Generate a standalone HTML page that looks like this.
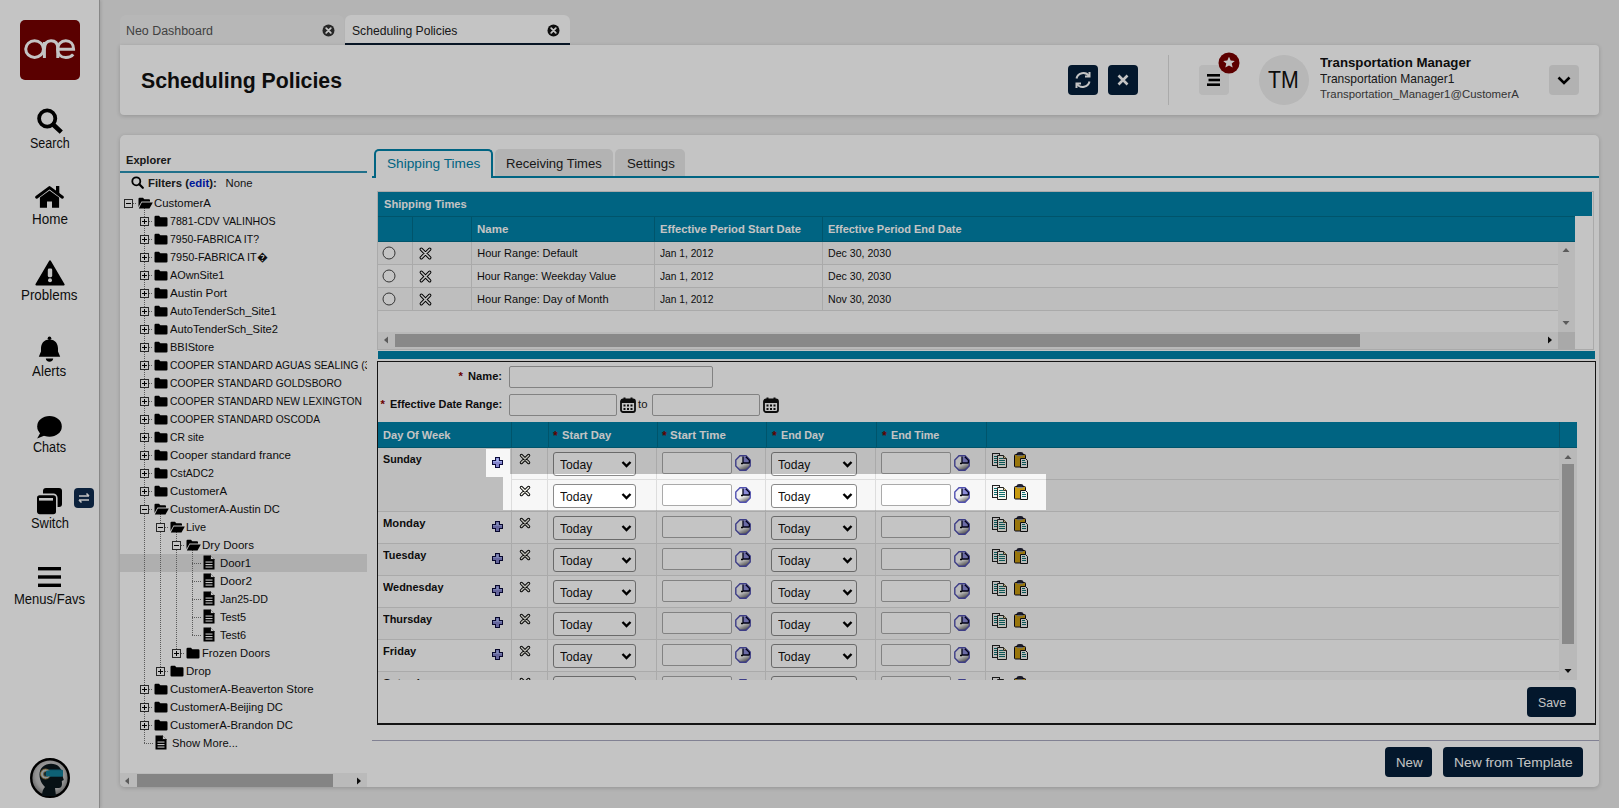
<!DOCTYPE html><html><head><meta charset="utf-8"><style>
*{box-sizing:border-box;margin:0;padding:0}
html,body{width:1619px;height:808px;overflow:hidden;background:#eaeaea;font-family:"Liberation Sans",sans-serif;color:#000}
.ab{position:absolute}
.t{position:absolute;white-space:nowrap;line-height:1;margin-top:1px}
</style></head><body>

<div class="ab" style="left:0;top:0;width:100px;height:808px;background:#fff;border-right:1px solid #b0b0b0;box-shadow:1px 0 3px rgba(0,0,0,.12)"></div>
<div class="ab" style="left:20px;top:20px;width:60px;height:60px;background:#750000;border-radius:5px"></div>
<svg class="ab" style="left:20px;top:20px" width="60" height="60" viewBox="0 0 60 60" fill="none" stroke="#fff" stroke-width="3">
<ellipse cx="14.6" cy="29.1" rx="8.9" ry="8.3"/>
<path d="M24.4 38 V22 M24.4 29.5 C24.4 23.5 27.2 20.8 31 20.8 C35.2 20.8 37.8 23.5 37.8 28.5 V38"/>
<path d="M38.2 29.3 H53.6 C53.6 24 50.3 20.8 45.8 20.8 C41 20.8 37.6 24.5 37.6 29.2 C37.6 34.3 41 37.6 45.8 37.6 C49 37.6 51.6 36.4 53.2 34.4"/>
</svg>
<svg class="ab" style="left:36px;top:107px" width="27" height="27" viewBox="0 0 27 27"><circle cx="11.2" cy="11.5" r="8.1" fill="none" stroke="#000" stroke-width="3.8"/><path d="M17.4 17.8 L23.6 23.6" stroke="#000" stroke-width="4.6" stroke-linecap="square"/></svg>
<div class="t" style="left:29.70px;top:136px;font-size:13.8px;color:#111;"><span style="display:inline-block;transform:scaleX(0.9062);transform-origin:0 0">Search</span></div>
<svg class="ab" style="left:34px;top:184px" width="31" height="26" viewBox="0 0 31 26"><rect x="22" y="2" width="3.3" height="8" fill="#000"/><path d="M2.6 13.2 L15.5 3.6 L28.4 13.2" fill="none" stroke="#000" stroke-width="3" stroke-linecap="round" stroke-linejoin="round"/><path d="M5.9 13.5 L15.5 6.6 L25.1 13.5 V23.7 H18 V17.6 H13 V23.7 H5.9 Z" fill="#000"/></svg>
<div class="t" style="left:31.55px;top:212px;font-size:13.8px;color:#111;"><span style="display:inline-block;transform:scaleX(0.9755);transform-origin:0 0">Home</span></div>
<svg class="ab" style="left:35px;top:260px" width="30" height="26" viewBox="0 0 30 26"><path d="M15 1.5 L28.5 24.5 H1.5 Z" fill="#000" stroke="#000" stroke-width="2.2" stroke-linejoin="round"/><rect x="12.8" y="8.6" width="4.4" height="8.6" rx="1.4" fill="#fff"/><circle cx="15" cy="20.2" r="2" fill="#fff"/></svg>
<div class="t" style="left:21.25px;top:288px;font-size:13.8px;color:#111;"><span style="display:inline-block;transform:scaleX(0.9691);transform-origin:0 0">Problems</span></div>
<svg class="ab" style="left:38px;top:336px" width="24" height="27" viewBox="0 0 24 27"><circle cx="11.5" cy="2.2" r="1.8" fill="#000"/><path d="M11.5 3.4 C17.5 3.4 20 8 20 12.5 V15.5 L22.2 20.8 H0.8 L3 15.5 V12.5 C3 8 5.5 3.4 11.5 3.4 Z" fill="#000"/><path d="M7.8 22.6 H15.2 C15.2 24.6 13.6 25.8 11.5 25.8 C9.4 25.8 7.8 24.6 7.8 22.6 Z" fill="#000"/></svg>
<div class="t" style="left:32.40px;top:364px;font-size:13.8px;color:#111;"><span style="display:inline-block;transform:scaleX(0.9688);transform-origin:0 0">Alerts</span></div>
<svg class="ab" style="left:36px;top:415px" width="28" height="25" viewBox="0 0 28 25"><ellipse cx="13.5" cy="11.4" rx="12.3" ry="10.3" fill="#000"/><path d="M5 16.5 L1.2 23.6 L10.5 19.8 Z" fill="#000"/></svg>
<div class="t" style="left:33.00px;top:440px;font-size:13.8px;color:#111;"><span style="display:inline-block;transform:scaleX(0.9141);transform-origin:0 0">Chats</span></div>
<svg class="ab" style="left:36px;top:487px" width="27" height="28" viewBox="0 0 27 28"><rect x="7" y="1" width="19" height="19" rx="3" fill="#000"/><rect x="0.2" y="7.4" width="20.6" height="20.6" rx="3.5" fill="#000" stroke="#fff" stroke-width="1.6"/><rect x="3" y="11" width="14" height="2.6" fill="#fff"/></svg>
<div class="ab" style="left:74px;top:488px;width:20px;height:20px;background:#0f2b4f;border-radius:4px"></div>
<svg class="ab" style="left:74px;top:488px" width="20" height="20" viewBox="0 0 20 20" fill="none" stroke="#fff" stroke-width="1.5"><path d="M5 8 H15 M12.5 5.5 L15 8 M15 12 H5 M7.5 14.5 L5 12"/></svg>
<div class="t" style="left:30.50px;top:516px;font-size:13.8px;color:#111;"><span style="display:inline-block;transform:scaleX(0.9360);transform-origin:0 0">Switch</span></div>
<svg class="ab" style="left:38px;top:566px" width="23" height="22" viewBox="0 0 23 22"><rect x="0" y="1" width="23" height="3.4" fill="#000"/><rect x="0" y="9.3" width="23" height="3.4" fill="#000"/><rect x="0" y="17.6" width="23" height="3.4" fill="#000"/></svg>
<div class="t" style="left:14.00px;top:592px;font-size:13.8px;color:#111;"><span style="display:inline-block;transform:scaleX(0.9441);transform-origin:0 0">Menus/Favs</span></div>
<svg class="ab" style="left:30px;top:758px" width="40" height="40" viewBox="0 0 40 40"><defs><radialGradient id="avg" cx="0.5" cy="0.45" r="0.55"><stop offset="0" stop-color="#e8e8e8"/><stop offset="0.7" stop-color="#bdbdbd"/><stop offset="1" stop-color="#7a7a7a"/></radialGradient></defs><circle cx="20" cy="20" r="18.8" fill="url(#avg)" stroke="#000" stroke-width="2.4"/><path d="M12 38 C12 34 13 31 15 29 C12 26 9.5 22 9.5 16.5 C9.5 10 14.5 5.8 21 5.8 C27.5 5.8 31.8 10 31.8 15.5 L33.8 22 L31.8 23 L32 26 C32 28.5 30.5 30.5 28 30 L25 30 L26 38 Z" fill="#0a171c"/><rect x="15" y="11.5" width="18" height="7" rx="1.5" fill="#0e6f86"/><circle cx="15.5" cy="16" r="5" fill="#b9c4c8" stroke="#a08040" stroke-width="0.9"/><circle cx="16" cy="16" r="2.6" fill="#1b3a44" stroke="#a08040" stroke-width="0.7"/><rect x="16" y="12.5" width="17" height="6" rx="1.2" fill="#137f99"/></svg>
<div class="ab" style="left:120px;top:15px;width:224px;height:30px;background:#efefef;border-radius:6px 6px 0 0"></div>
<div class="t" style="left:126.20px;top:24px;font-size:12.3px;color:#555;"><span style="display:inline-block;transform:scaleX(1.0093);transform-origin:0 0">Neo Dashboard</span></div>
<svg class="ab" style="left:322px;top:24px" width="13" height="13" viewBox="0 0 13 13"><circle cx="6.5" cy="6.5" r="6" fill="#333"/><path d="M4.2 4.2 L8.8 8.8 M8.8 4.2 L4.2 8.8" stroke="#fff" stroke-width="1.8" stroke-linecap="round"/></svg>
<div class="ab" style="left:345px;top:15px;width:225px;height:30px;background:#fff;border-radius:6px 6px 0 0;border-bottom:2px solid #0c1e33"></div>
<div class="t" style="left:351.60px;top:24px;font-size:12.3px;color:#222;"><span style="display:inline-block;transform:scaleX(0.9888);transform-origin:0 0">Scheduling Policies</span></div>
<svg class="ab" style="left:547px;top:24px" width="13" height="13" viewBox="0 0 13 13"><circle cx="6.5" cy="6.5" r="6" fill="#111"/><path d="M4.2 4.2 L8.8 8.8 M8.8 4.2 L4.2 8.8" stroke="#fff" stroke-width="1.8" stroke-linecap="round"/></svg>
<div class="ab" style="left:120px;top:45px;width:1479px;height:70px;background:#fff;border-radius:0 4px 4px 4px;box-shadow:0 1px 4px rgba(0,0,0,.18)"></div>
<div class="t" style="left:140.70px;top:70px;font-size:21.5px;font-weight:bold;color:#111;"><span style="display:inline-block;transform:scaleX(0.9897);transform-origin:0 0">Scheduling Policies</span></div>
<div class="ab" style="left:1068px;top:65px;width:30px;height:30px;background:#041f3a;border-radius:4px"></div>
<svg class="ab" style="left:1068px;top:65px" width="30" height="30" viewBox="0 0 30 30" fill="none" stroke="#fff" stroke-width="2"><path d="M8.5 13.5 A7 7 0 0 1 21 11 M21.5 16.5 A7 7 0 0 1 9 19"/><path d="M21.5 7 V11.5 H17" /><path d="M8.5 23 V18.5 H13"/></svg>
<div class="ab" style="left:1108px;top:65px;width:30px;height:30px;background:#041f3a;border-radius:4px"></div>
<svg class="ab" style="left:1108px;top:65px" width="30" height="30" viewBox="0 0 30 30" fill="none" stroke="#fff" stroke-width="2.6"><path d="M10.5 10.5 L19.5 19.5 M19.5 10.5 L10.5 19.5"/></svg>
<div class="ab" style="left:1168px;top:55px;width:1px;height:50px;background:#ddd"></div>
<div class="ab" style="left:1199px;top:65px;width:30px;height:30px;background:#f0f0f0;border-radius:4px"></div>
<svg class="ab" style="left:1199px;top:65px" width="30" height="30" viewBox="0 0 30 30" fill="#000"><rect x="8" y="9" width="13" height="2.6"/><rect x="9.5" y="13.7" width="11.5" height="2.6"/><rect x="8" y="18.4" width="13" height="2.6"/></svg>
<svg class="ab" style="left:1218px;top:52px" width="22" height="22" viewBox="0 0 22 22"><circle cx="11" cy="11" r="10.5" fill="#7a0000"/><path d="M11 4.8 L12.7 8.6 L16.8 8.9 L13.7 11.6 L14.7 15.6 L11 13.4 L7.3 15.6 L8.3 11.6 L5.2 8.9 L9.3 8.6 Z" fill="#fff"/></svg>
<div class="ab" style="left:1259px;top:55px;width:50px;height:50px;background:#eee;border-radius:50%"></div>
<div class="t" style="left:1268.40px;top:68px;font-size:23.2px;color:#111;"><span style="display:inline-block;transform:scaleX(0.9194);transform-origin:0 0">TM</span></div>
<div class="t" style="left:1319.60px;top:55px;font-size:13.3px;font-weight:bold;color:#111;"><span style="display:inline-block;transform:scaleX(0.9967);transform-origin:0 0">Transportation Manager</span></div>
<div class="t" style="left:1319.60px;top:72px;font-size:12.1px;color:#222;"><span style="display:inline-block;transform:scaleX(0.9934);transform-origin:0 0">Transportation Manager1</span></div>
<div class="t" style="left:1319.60px;top:88px;font-size:11.4px;color:#444;"><span style="display:inline-block;transform:scaleX(0.9980);transform-origin:0 0">Transportation_Manager1@CustomerA</span></div>
<div class="ab" style="left:1549px;top:65px;width:30px;height:30px;background:#e8e8e8;border-radius:4px"></div>
<svg class="ab" style="left:1549px;top:65px" width="30" height="30" viewBox="0 0 30 30" fill="none" stroke="#000" stroke-width="2.6"><path d="M9.5 12.5 L15 18 L20.5 12.5"/></svg>
<div class="ab" style="left:120px;top:135px;width:1479px;height:652px;background:#fff;border-radius:5px;box-shadow:0 1px 4px rgba(0,0,0,.18)"></div>
<div class="t" style="left:125.70px;top:154px;font-size:11.5px;font-weight:bold;color:#222;"><span style="display:inline-block;transform:scaleX(0.9636);transform-origin:0 0">Explorer</span></div>
<div class="ab" style="left:120px;top:171px;width:247px;height:2px;background:#2a92b4"></div>
<svg class="ab" style="left:131px;top:176px" width="13" height="13" viewBox="0 0 13 13"><circle cx="5.3" cy="5.3" r="4" fill="none" stroke="#000" stroke-width="1.8"/><path d="M8.3 8.3 L11.8 11.8" stroke="#000" stroke-width="2.2" stroke-linecap="round"/></svg>
<div class="t" style="left:147.60px;top:177px;font-size:11.3px;font-weight:bold;color:#222;"><span style="display:inline-block;transform:scaleX(1.0044);transform-origin:0 0">Filters (<span style="color:#0022c8">edit</span>):</span></div>
<div class="t" style="left:225.60px;top:177px;font-size:11.3px;color:#222;"><span style="display:inline-block;transform:scaleX(1.0000);transform-origin:0 0">None</span></div>
<div class="ab" style="left:120px;top:554px;width:247px;height:18px;background:#e4e4e4"></div>
<div class="ab" style="left:144px;top:208px;width:1px;height:535px;background-image:linear-gradient(#777 50%,transparent 50%);background-size:1px 2px"></div>
<div class="ab" style="left:160px;top:514px;width:1px;height:157px;background-image:linear-gradient(#777 50%,transparent 50%);background-size:1px 2px"></div>
<div class="ab" style="left:176px;top:532px;width:1px;height:121px;background-image:linear-gradient(#777 50%,transparent 50%);background-size:1px 2px"></div>
<div class="ab" style="left:192px;top:550px;width:1px;height:85px;background-image:linear-gradient(#777 50%,transparent 50%);background-size:1px 2px"></div>
<div class="ab" style="left:124px;top:199px;width:9px;height:9px;border:1px solid #333;background:#fff"></div>
<div class="ab" style="left:126px;top:203px;width:5px;height:1px;background:#000"></div>
<div class="ab" style="left:133px;top:203px;width:4px;height:1px;background-image:linear-gradient(90deg,#777 50%,transparent 50%);background-size:2px 1px"></div>
<svg class="ab" style="left:138px;top:197px" width="15" height="12" viewBox="0 0 15 12"><path d="M0.5 1.8 Q0.5 0.8 1.5 0.8 H5 L6.3 2.2 H11 Q12 2.2 12 3.2 V4.5 H3.5 L0.5 10 Z" fill="#000"/><path d="M3.8 5.5 H14.8 L11.5 11.5 H0.8 Z" fill="#000"/></svg>
<div class="t" style="left:154px;top:197px;font-size:11.1px;color:#111;overflow:hidden;width:213px"><span style="display:inline-block;transform:scaleX(1.023);transform-origin:0 0">CustomerA</span></div>
<div class="ab" style="left:140px;top:217px;width:9px;height:9px;border:1px solid #333;background:#fff"></div>
<div class="ab" style="left:142px;top:221px;width:5px;height:1px;background:#000"></div>
<div class="ab" style="left:144px;top:219px;width:1px;height:5px;background:#000"></div>
<div class="ab" style="left:149px;top:221px;width:4px;height:1px;background-image:linear-gradient(90deg,#777 50%,transparent 50%);background-size:2px 1px"></div>
<svg class="ab" style="left:154px;top:215px" width="14" height="12" viewBox="0 0 14 12"><path d="M0.5 2 Q0.5 0.8 1.7 0.8 H5 L6.3 2.2 H12.3 Q13.5 2.2 13.5 3.4 V10.5 Q13.5 11.5 12.3 11.5 H1.7 Q0.5 11.5 0.5 10.5 Z" fill="#000"/></svg>
<div class="t" style="left:170px;top:215px;font-size:11.1px;color:#111;overflow:hidden;width:197px"><span style="display:inline-block;transform:scaleX(0.959);transform-origin:0 0">7881-CDV VALINHOS</span></div>
<div class="ab" style="left:140px;top:235px;width:9px;height:9px;border:1px solid #333;background:#fff"></div>
<div class="ab" style="left:142px;top:239px;width:5px;height:1px;background:#000"></div>
<div class="ab" style="left:144px;top:237px;width:1px;height:5px;background:#000"></div>
<div class="ab" style="left:149px;top:239px;width:4px;height:1px;background-image:linear-gradient(90deg,#777 50%,transparent 50%);background-size:2px 1px"></div>
<svg class="ab" style="left:154px;top:233px" width="14" height="12" viewBox="0 0 14 12"><path d="M0.5 2 Q0.5 0.8 1.7 0.8 H5 L6.3 2.2 H12.3 Q13.5 2.2 13.5 3.4 V10.5 Q13.5 11.5 12.3 11.5 H1.7 Q0.5 11.5 0.5 10.5 Z" fill="#000"/></svg>
<div class="t" style="left:170px;top:233px;font-size:11.1px;color:#111;overflow:hidden;width:197px"><span style="display:inline-block;transform:scaleX(0.943);transform-origin:0 0">7950-FABRICA IT?</span></div>
<div class="ab" style="left:140px;top:253px;width:9px;height:9px;border:1px solid #333;background:#fff"></div>
<div class="ab" style="left:142px;top:257px;width:5px;height:1px;background:#000"></div>
<div class="ab" style="left:144px;top:255px;width:1px;height:5px;background:#000"></div>
<div class="ab" style="left:149px;top:257px;width:4px;height:1px;background-image:linear-gradient(90deg,#777 50%,transparent 50%);background-size:2px 1px"></div>
<svg class="ab" style="left:154px;top:251px" width="14" height="12" viewBox="0 0 14 12"><path d="M0.5 2 Q0.5 0.8 1.7 0.8 H5 L6.3 2.2 H12.3 Q13.5 2.2 13.5 3.4 V10.5 Q13.5 11.5 12.3 11.5 H1.7 Q0.5 11.5 0.5 10.5 Z" fill="#000"/></svg>
<div class="t" style="left:170px;top:251px;font-size:11.1px;color:#111;overflow:hidden;width:197px"><span style="display:inline-block;transform:scaleX(0.984);transform-origin:0 0">7950-FABRICA IT�</span></div>
<div class="ab" style="left:140px;top:271px;width:9px;height:9px;border:1px solid #333;background:#fff"></div>
<div class="ab" style="left:142px;top:275px;width:5px;height:1px;background:#000"></div>
<div class="ab" style="left:144px;top:273px;width:1px;height:5px;background:#000"></div>
<div class="ab" style="left:149px;top:275px;width:4px;height:1px;background-image:linear-gradient(90deg,#777 50%,transparent 50%);background-size:2px 1px"></div>
<svg class="ab" style="left:154px;top:269px" width="14" height="12" viewBox="0 0 14 12"><path d="M0.5 2 Q0.5 0.8 1.7 0.8 H5 L6.3 2.2 H12.3 Q13.5 2.2 13.5 3.4 V10.5 Q13.5 11.5 12.3 11.5 H1.7 Q0.5 11.5 0.5 10.5 Z" fill="#000"/></svg>
<div class="t" style="left:170px;top:269px;font-size:11.1px;color:#111;overflow:hidden;width:197px"><span style="display:inline-block;transform:scaleX(0.980);transform-origin:0 0">AOwnSite1</span></div>
<div class="ab" style="left:140px;top:289px;width:9px;height:9px;border:1px solid #333;background:#fff"></div>
<div class="ab" style="left:142px;top:293px;width:5px;height:1px;background:#000"></div>
<div class="ab" style="left:144px;top:291px;width:1px;height:5px;background:#000"></div>
<div class="ab" style="left:149px;top:293px;width:4px;height:1px;background-image:linear-gradient(90deg,#777 50%,transparent 50%);background-size:2px 1px"></div>
<svg class="ab" style="left:154px;top:287px" width="14" height="12" viewBox="0 0 14 12"><path d="M0.5 2 Q0.5 0.8 1.7 0.8 H5 L6.3 2.2 H12.3 Q13.5 2.2 13.5 3.4 V10.5 Q13.5 11.5 12.3 11.5 H1.7 Q0.5 11.5 0.5 10.5 Z" fill="#000"/></svg>
<div class="t" style="left:170px;top:287px;font-size:11.1px;color:#111;overflow:hidden;width:197px"><span style="display:inline-block;transform:scaleX(1.050);transform-origin:0 0">Austin Port</span></div>
<div class="ab" style="left:140px;top:307px;width:9px;height:9px;border:1px solid #333;background:#fff"></div>
<div class="ab" style="left:142px;top:311px;width:5px;height:1px;background:#000"></div>
<div class="ab" style="left:144px;top:309px;width:1px;height:5px;background:#000"></div>
<div class="ab" style="left:149px;top:311px;width:4px;height:1px;background-image:linear-gradient(90deg,#777 50%,transparent 50%);background-size:2px 1px"></div>
<svg class="ab" style="left:154px;top:305px" width="14" height="12" viewBox="0 0 14 12"><path d="M0.5 2 Q0.5 0.8 1.7 0.8 H5 L6.3 2.2 H12.3 Q13.5 2.2 13.5 3.4 V10.5 Q13.5 11.5 12.3 11.5 H1.7 Q0.5 11.5 0.5 10.5 Z" fill="#000"/></svg>
<div class="t" style="left:170px;top:305px;font-size:11.1px;color:#111;overflow:hidden;width:197px"><span style="display:inline-block;transform:scaleX(0.991);transform-origin:0 0">AutoTenderSch_Site1</span></div>
<div class="ab" style="left:140px;top:325px;width:9px;height:9px;border:1px solid #333;background:#fff"></div>
<div class="ab" style="left:142px;top:329px;width:5px;height:1px;background:#000"></div>
<div class="ab" style="left:144px;top:327px;width:1px;height:5px;background:#000"></div>
<div class="ab" style="left:149px;top:329px;width:4px;height:1px;background-image:linear-gradient(90deg,#777 50%,transparent 50%);background-size:2px 1px"></div>
<svg class="ab" style="left:154px;top:323px" width="14" height="12" viewBox="0 0 14 12"><path d="M0.5 2 Q0.5 0.8 1.7 0.8 H5 L6.3 2.2 H12.3 Q13.5 2.2 13.5 3.4 V10.5 Q13.5 11.5 12.3 11.5 H1.7 Q0.5 11.5 0.5 10.5 Z" fill="#000"/></svg>
<div class="t" style="left:170px;top:323px;font-size:11.1px;color:#111;overflow:hidden;width:197px"><span style="display:inline-block;transform:scaleX(1.006);transform-origin:0 0">AutoTenderSch_Site2</span></div>
<div class="ab" style="left:140px;top:343px;width:9px;height:9px;border:1px solid #333;background:#fff"></div>
<div class="ab" style="left:142px;top:347px;width:5px;height:1px;background:#000"></div>
<div class="ab" style="left:144px;top:345px;width:1px;height:5px;background:#000"></div>
<div class="ab" style="left:149px;top:347px;width:4px;height:1px;background-image:linear-gradient(90deg,#777 50%,transparent 50%);background-size:2px 1px"></div>
<svg class="ab" style="left:154px;top:341px" width="14" height="12" viewBox="0 0 14 12"><path d="M0.5 2 Q0.5 0.8 1.7 0.8 H5 L6.3 2.2 H12.3 Q13.5 2.2 13.5 3.4 V10.5 Q13.5 11.5 12.3 11.5 H1.7 Q0.5 11.5 0.5 10.5 Z" fill="#000"/></svg>
<div class="t" style="left:170px;top:341px;font-size:11.1px;color:#111;overflow:hidden;width:197px"><span style="display:inline-block;transform:scaleX(0.991);transform-origin:0 0">BBIStore</span></div>
<div class="ab" style="left:140px;top:361px;width:9px;height:9px;border:1px solid #333;background:#fff"></div>
<div class="ab" style="left:142px;top:365px;width:5px;height:1px;background:#000"></div>
<div class="ab" style="left:144px;top:363px;width:1px;height:5px;background:#000"></div>
<div class="ab" style="left:149px;top:365px;width:4px;height:1px;background-image:linear-gradient(90deg,#777 50%,transparent 50%);background-size:2px 1px"></div>
<svg class="ab" style="left:154px;top:359px" width="14" height="12" viewBox="0 0 14 12"><path d="M0.5 2 Q0.5 0.8 1.7 0.8 H5 L6.3 2.2 H12.3 Q13.5 2.2 13.5 3.4 V10.5 Q13.5 11.5 12.3 11.5 H1.7 Q0.5 11.5 0.5 10.5 Z" fill="#000"/></svg>
<div class="t" style="left:170px;top:359px;font-size:11.1px;color:#111;overflow:hidden;width:197px"><span style="display:inline-block;transform:scaleX(0.924);transform-origin:0 0">COOPER STANDARD AGUAS SEALING (3</span></div>
<div class="ab" style="left:140px;top:379px;width:9px;height:9px;border:1px solid #333;background:#fff"></div>
<div class="ab" style="left:142px;top:383px;width:5px;height:1px;background:#000"></div>
<div class="ab" style="left:144px;top:381px;width:1px;height:5px;background:#000"></div>
<div class="ab" style="left:149px;top:383px;width:4px;height:1px;background-image:linear-gradient(90deg,#777 50%,transparent 50%);background-size:2px 1px"></div>
<svg class="ab" style="left:154px;top:377px" width="14" height="12" viewBox="0 0 14 12"><path d="M0.5 2 Q0.5 0.8 1.7 0.8 H5 L6.3 2.2 H12.3 Q13.5 2.2 13.5 3.4 V10.5 Q13.5 11.5 12.3 11.5 H1.7 Q0.5 11.5 0.5 10.5 Z" fill="#000"/></svg>
<div class="t" style="left:170px;top:377px;font-size:11.1px;color:#111;overflow:hidden;width:197px"><span style="display:inline-block;transform:scaleX(0.924);transform-origin:0 0">COOPER STANDARD GOLDSBORO</span></div>
<div class="ab" style="left:140px;top:397px;width:9px;height:9px;border:1px solid #333;background:#fff"></div>
<div class="ab" style="left:142px;top:401px;width:5px;height:1px;background:#000"></div>
<div class="ab" style="left:144px;top:399px;width:1px;height:5px;background:#000"></div>
<div class="ab" style="left:149px;top:401px;width:4px;height:1px;background-image:linear-gradient(90deg,#777 50%,transparent 50%);background-size:2px 1px"></div>
<svg class="ab" style="left:154px;top:395px" width="14" height="12" viewBox="0 0 14 12"><path d="M0.5 2 Q0.5 0.8 1.7 0.8 H5 L6.3 2.2 H12.3 Q13.5 2.2 13.5 3.4 V10.5 Q13.5 11.5 12.3 11.5 H1.7 Q0.5 11.5 0.5 10.5 Z" fill="#000"/></svg>
<div class="t" style="left:170px;top:395px;font-size:11.1px;color:#111;overflow:hidden;width:197px"><span style="display:inline-block;transform:scaleX(0.926);transform-origin:0 0">COOPER STANDARD NEW LEXINGTON</span></div>
<div class="ab" style="left:140px;top:415px;width:9px;height:9px;border:1px solid #333;background:#fff"></div>
<div class="ab" style="left:142px;top:419px;width:5px;height:1px;background:#000"></div>
<div class="ab" style="left:144px;top:417px;width:1px;height:5px;background:#000"></div>
<div class="ab" style="left:149px;top:419px;width:4px;height:1px;background-image:linear-gradient(90deg,#777 50%,transparent 50%);background-size:2px 1px"></div>
<svg class="ab" style="left:154px;top:413px" width="14" height="12" viewBox="0 0 14 12"><path d="M0.5 2 Q0.5 0.8 1.7 0.8 H5 L6.3 2.2 H12.3 Q13.5 2.2 13.5 3.4 V10.5 Q13.5 11.5 12.3 11.5 H1.7 Q0.5 11.5 0.5 10.5 Z" fill="#000"/></svg>
<div class="t" style="left:170px;top:413px;font-size:11.1px;color:#111;overflow:hidden;width:197px"><span style="display:inline-block;transform:scaleX(0.923);transform-origin:0 0">COOPER STANDARD OSCODA</span></div>
<div class="ab" style="left:140px;top:433px;width:9px;height:9px;border:1px solid #333;background:#fff"></div>
<div class="ab" style="left:142px;top:437px;width:5px;height:1px;background:#000"></div>
<div class="ab" style="left:144px;top:435px;width:1px;height:5px;background:#000"></div>
<div class="ab" style="left:149px;top:437px;width:4px;height:1px;background-image:linear-gradient(90deg,#777 50%,transparent 50%);background-size:2px 1px"></div>
<svg class="ab" style="left:154px;top:431px" width="14" height="12" viewBox="0 0 14 12"><path d="M0.5 2 Q0.5 0.8 1.7 0.8 H5 L6.3 2.2 H12.3 Q13.5 2.2 13.5 3.4 V10.5 Q13.5 11.5 12.3 11.5 H1.7 Q0.5 11.5 0.5 10.5 Z" fill="#000"/></svg>
<div class="t" style="left:170px;top:431px;font-size:11.1px;color:#111;overflow:hidden;width:197px"><span style="display:inline-block;transform:scaleX(0.934);transform-origin:0 0">CR site</span></div>
<div class="ab" style="left:140px;top:451px;width:9px;height:9px;border:1px solid #333;background:#fff"></div>
<div class="ab" style="left:142px;top:455px;width:5px;height:1px;background:#000"></div>
<div class="ab" style="left:144px;top:453px;width:1px;height:5px;background:#000"></div>
<div class="ab" style="left:149px;top:455px;width:4px;height:1px;background-image:linear-gradient(90deg,#777 50%,transparent 50%);background-size:2px 1px"></div>
<svg class="ab" style="left:154px;top:449px" width="14" height="12" viewBox="0 0 14 12"><path d="M0.5 2 Q0.5 0.8 1.7 0.8 H5 L6.3 2.2 H12.3 Q13.5 2.2 13.5 3.4 V10.5 Q13.5 11.5 12.3 11.5 H1.7 Q0.5 11.5 0.5 10.5 Z" fill="#000"/></svg>
<div class="t" style="left:170px;top:449px;font-size:11.1px;color:#111;overflow:hidden;width:197px"><span style="display:inline-block;transform:scaleX(1.038);transform-origin:0 0">Cooper standard france</span></div>
<div class="ab" style="left:140px;top:469px;width:9px;height:9px;border:1px solid #333;background:#fff"></div>
<div class="ab" style="left:142px;top:473px;width:5px;height:1px;background:#000"></div>
<div class="ab" style="left:144px;top:471px;width:1px;height:5px;background:#000"></div>
<div class="ab" style="left:149px;top:473px;width:4px;height:1px;background-image:linear-gradient(90deg,#777 50%,transparent 50%);background-size:2px 1px"></div>
<svg class="ab" style="left:154px;top:467px" width="14" height="12" viewBox="0 0 14 12"><path d="M0.5 2 Q0.5 0.8 1.7 0.8 H5 L6.3 2.2 H12.3 Q13.5 2.2 13.5 3.4 V10.5 Q13.5 11.5 12.3 11.5 H1.7 Q0.5 11.5 0.5 10.5 Z" fill="#000"/></svg>
<div class="t" style="left:170px;top:467px;font-size:11.1px;color:#111;overflow:hidden;width:197px"><span style="display:inline-block;transform:scaleX(0.950);transform-origin:0 0">CstADC2</span></div>
<div class="ab" style="left:140px;top:487px;width:9px;height:9px;border:1px solid #333;background:#fff"></div>
<div class="ab" style="left:142px;top:491px;width:5px;height:1px;background:#000"></div>
<div class="ab" style="left:144px;top:489px;width:1px;height:5px;background:#000"></div>
<div class="ab" style="left:149px;top:491px;width:4px;height:1px;background-image:linear-gradient(90deg,#777 50%,transparent 50%);background-size:2px 1px"></div>
<svg class="ab" style="left:154px;top:485px" width="14" height="12" viewBox="0 0 14 12"><path d="M0.5 2 Q0.5 0.8 1.7 0.8 H5 L6.3 2.2 H12.3 Q13.5 2.2 13.5 3.4 V10.5 Q13.5 11.5 12.3 11.5 H1.7 Q0.5 11.5 0.5 10.5 Z" fill="#000"/></svg>
<div class="t" style="left:170px;top:485px;font-size:11.1px;color:#111;overflow:hidden;width:197px"><span style="display:inline-block;transform:scaleX(1.027);transform-origin:0 0">CustomerA</span></div>
<div class="ab" style="left:140px;top:505px;width:9px;height:9px;border:1px solid #333;background:#fff"></div>
<div class="ab" style="left:142px;top:509px;width:5px;height:1px;background:#000"></div>
<div class="ab" style="left:149px;top:509px;width:4px;height:1px;background-image:linear-gradient(90deg,#777 50%,transparent 50%);background-size:2px 1px"></div>
<svg class="ab" style="left:154px;top:503px" width="15" height="12" viewBox="0 0 15 12"><path d="M0.5 1.8 Q0.5 0.8 1.5 0.8 H5 L6.3 2.2 H11 Q12 2.2 12 3.2 V4.5 H3.5 L0.5 10 Z" fill="#000"/><path d="M3.8 5.5 H14.8 L11.5 11.5 H0.8 Z" fill="#000"/></svg>
<div class="t" style="left:170px;top:503px;font-size:11.1px;color:#111;overflow:hidden;width:197px"><span style="display:inline-block;transform:scaleX(1.007);transform-origin:0 0">CustomerA-Austin DC</span></div>
<div class="ab" style="left:156px;top:523px;width:9px;height:9px;border:1px solid #333;background:#fff"></div>
<div class="ab" style="left:158px;top:527px;width:5px;height:1px;background:#000"></div>
<div class="ab" style="left:165px;top:527px;width:4px;height:1px;background-image:linear-gradient(90deg,#777 50%,transparent 50%);background-size:2px 1px"></div>
<svg class="ab" style="left:170px;top:521px" width="15" height="12" viewBox="0 0 15 12"><path d="M0.5 1.8 Q0.5 0.8 1.5 0.8 H5 L6.3 2.2 H11 Q12 2.2 12 3.2 V4.5 H3.5 L0.5 10 Z" fill="#000"/><path d="M3.8 5.5 H14.8 L11.5 11.5 H0.8 Z" fill="#000"/></svg>
<div class="t" style="left:186px;top:521px;font-size:11.1px;color:#111;overflow:hidden;width:181px"><span style="display:inline-block;transform:scaleX(0.980);transform-origin:0 0">Live</span></div>
<div class="ab" style="left:172px;top:541px;width:9px;height:9px;border:1px solid #333;background:#fff"></div>
<div class="ab" style="left:174px;top:545px;width:5px;height:1px;background:#000"></div>
<div class="ab" style="left:181px;top:545px;width:4px;height:1px;background-image:linear-gradient(90deg,#777 50%,transparent 50%);background-size:2px 1px"></div>
<svg class="ab" style="left:186px;top:539px" width="15" height="12" viewBox="0 0 15 12"><path d="M0.5 1.8 Q0.5 0.8 1.5 0.8 H5 L6.3 2.2 H11 Q12 2.2 12 3.2 V4.5 H3.5 L0.5 10 Z" fill="#000"/><path d="M3.8 5.5 H14.8 L11.5 11.5 H0.8 Z" fill="#000"/></svg>
<div class="t" style="left:202px;top:539px;font-size:11.1px;color:#111;overflow:hidden;width:165px"><span style="display:inline-block;transform:scaleX(1.040);transform-origin:0 0">Dry Doors</span></div>
<div class="ab" style="left:192px;top:563px;width:9px;height:1px;background-image:linear-gradient(90deg,#777 50%,transparent 50%);background-size:2px 1px"></div>
<svg class="ab" style="left:203px;top:555px" width="12" height="15" viewBox="0 0 12 15"><path d="M0.5 0.5 H7.5 L11.5 4.5 V14.5 H0.5 Z" fill="#000"/><path d="M7.5 0.5 V4.5 H11.5" fill="#fff" stroke="#000" stroke-width="0.8"/><rect x="2.5" y="6.5" width="7" height="1.1" fill="#fff"/><rect x="2.5" y="9" width="7" height="1.1" fill="#fff"/><rect x="2.5" y="11.5" width="7" height="1.1" fill="#fff"/></svg>
<div class="t" style="left:220px;top:557px;font-size:11.1px;color:#111;overflow:hidden;width:147px"><span style="display:inline-block;transform:scaleX(1.026);transform-origin:0 0">Door1</span></div>
<div class="ab" style="left:192px;top:581px;width:9px;height:1px;background-image:linear-gradient(90deg,#777 50%,transparent 50%);background-size:2px 1px"></div>
<svg class="ab" style="left:203px;top:573px" width="12" height="15" viewBox="0 0 12 15"><path d="M0.5 0.5 H7.5 L11.5 4.5 V14.5 H0.5 Z" fill="#000"/><path d="M7.5 0.5 V4.5 H11.5" fill="#fff" stroke="#000" stroke-width="0.8"/><rect x="2.5" y="6.5" width="7" height="1.1" fill="#fff"/><rect x="2.5" y="9" width="7" height="1.1" fill="#fff"/><rect x="2.5" y="11.5" width="7" height="1.1" fill="#fff"/></svg>
<div class="t" style="left:220px;top:575px;font-size:11.1px;color:#111;overflow:hidden;width:147px"><span style="display:inline-block;transform:scaleX(1.060);transform-origin:0 0">Door2</span></div>
<div class="ab" style="left:192px;top:599px;width:9px;height:1px;background-image:linear-gradient(90deg,#777 50%,transparent 50%);background-size:2px 1px"></div>
<svg class="ab" style="left:203px;top:591px" width="12" height="15" viewBox="0 0 12 15"><path d="M0.5 0.5 H7.5 L11.5 4.5 V14.5 H0.5 Z" fill="#000"/><path d="M7.5 0.5 V4.5 H11.5" fill="#fff" stroke="#000" stroke-width="0.8"/><rect x="2.5" y="6.5" width="7" height="1.1" fill="#fff"/><rect x="2.5" y="9" width="7" height="1.1" fill="#fff"/><rect x="2.5" y="11.5" width="7" height="1.1" fill="#fff"/></svg>
<div class="t" style="left:220px;top:593px;font-size:11.1px;color:#111;overflow:hidden;width:147px"><span style="display:inline-block;transform:scaleX(0.960);transform-origin:0 0">Jan25-DD</span></div>
<div class="ab" style="left:192px;top:617px;width:9px;height:1px;background-image:linear-gradient(90deg,#777 50%,transparent 50%);background-size:2px 1px"></div>
<svg class="ab" style="left:203px;top:609px" width="12" height="15" viewBox="0 0 12 15"><path d="M0.5 0.5 H7.5 L11.5 4.5 V14.5 H0.5 Z" fill="#000"/><path d="M7.5 0.5 V4.5 H11.5" fill="#fff" stroke="#000" stroke-width="0.8"/><rect x="2.5" y="6.5" width="7" height="1.1" fill="#fff"/><rect x="2.5" y="9" width="7" height="1.1" fill="#fff"/><rect x="2.5" y="11.5" width="7" height="1.1" fill="#fff"/></svg>
<div class="t" style="left:220px;top:611px;font-size:11.1px;color:#111;overflow:hidden;width:147px"><span style="display:inline-block;transform:scaleX(0.981);transform-origin:0 0">Test5</span></div>
<div class="ab" style="left:192px;top:635px;width:9px;height:1px;background-image:linear-gradient(90deg,#777 50%,transparent 50%);background-size:2px 1px"></div>
<svg class="ab" style="left:203px;top:627px" width="12" height="15" viewBox="0 0 12 15"><path d="M0.5 0.5 H7.5 L11.5 4.5 V14.5 H0.5 Z" fill="#000"/><path d="M7.5 0.5 V4.5 H11.5" fill="#fff" stroke="#000" stroke-width="0.8"/><rect x="2.5" y="6.5" width="7" height="1.1" fill="#fff"/><rect x="2.5" y="9" width="7" height="1.1" fill="#fff"/><rect x="2.5" y="11.5" width="7" height="1.1" fill="#fff"/></svg>
<div class="t" style="left:220px;top:629px;font-size:11.1px;color:#111;overflow:hidden;width:147px"><span style="display:inline-block;transform:scaleX(0.981);transform-origin:0 0">Test6</span></div>
<div class="ab" style="left:172px;top:649px;width:9px;height:9px;border:1px solid #333;background:#fff"></div>
<div class="ab" style="left:174px;top:653px;width:5px;height:1px;background:#000"></div>
<div class="ab" style="left:176px;top:651px;width:1px;height:5px;background:#000"></div>
<div class="ab" style="left:181px;top:653px;width:4px;height:1px;background-image:linear-gradient(90deg,#777 50%,transparent 50%);background-size:2px 1px"></div>
<svg class="ab" style="left:186px;top:647px" width="14" height="12" viewBox="0 0 14 12"><path d="M0.5 2 Q0.5 0.8 1.7 0.8 H5 L6.3 2.2 H12.3 Q13.5 2.2 13.5 3.4 V10.5 Q13.5 11.5 12.3 11.5 H1.7 Q0.5 11.5 0.5 10.5 Z" fill="#000"/></svg>
<div class="t" style="left:202px;top:647px;font-size:11.1px;color:#111;overflow:hidden;width:165px"><span style="display:inline-block;transform:scaleX(1.012);transform-origin:0 0">Frozen Doors</span></div>
<div class="ab" style="left:156px;top:667px;width:9px;height:9px;border:1px solid #333;background:#fff"></div>
<div class="ab" style="left:158px;top:671px;width:5px;height:1px;background:#000"></div>
<div class="ab" style="left:160px;top:669px;width:1px;height:5px;background:#000"></div>
<div class="ab" style="left:165px;top:671px;width:4px;height:1px;background-image:linear-gradient(90deg,#777 50%,transparent 50%);background-size:2px 1px"></div>
<svg class="ab" style="left:170px;top:665px" width="14" height="12" viewBox="0 0 14 12"><path d="M0.5 2 Q0.5 0.8 1.7 0.8 H5 L6.3 2.2 H12.3 Q13.5 2.2 13.5 3.4 V10.5 Q13.5 11.5 12.3 11.5 H1.7 Q0.5 11.5 0.5 10.5 Z" fill="#000"/></svg>
<div class="t" style="left:186px;top:665px;font-size:11.1px;color:#111;overflow:hidden;width:181px"><span style="display:inline-block;transform:scaleX(1.037);transform-origin:0 0">Drop</span></div>
<div class="ab" style="left:140px;top:685px;width:9px;height:9px;border:1px solid #333;background:#fff"></div>
<div class="ab" style="left:142px;top:689px;width:5px;height:1px;background:#000"></div>
<div class="ab" style="left:144px;top:687px;width:1px;height:5px;background:#000"></div>
<div class="ab" style="left:149px;top:689px;width:4px;height:1px;background-image:linear-gradient(90deg,#777 50%,transparent 50%);background-size:2px 1px"></div>
<svg class="ab" style="left:154px;top:683px" width="14" height="12" viewBox="0 0 14 12"><path d="M0.5 2 Q0.5 0.8 1.7 0.8 H5 L6.3 2.2 H12.3 Q13.5 2.2 13.5 3.4 V10.5 Q13.5 11.5 12.3 11.5 H1.7 Q0.5 11.5 0.5 10.5 Z" fill="#000"/></svg>
<div class="t" style="left:170px;top:683px;font-size:11.1px;color:#111;overflow:hidden;width:197px"><span style="display:inline-block;transform:scaleX(1.031);transform-origin:0 0">CustomerA-Beaverton Store</span></div>
<div class="ab" style="left:140px;top:703px;width:9px;height:9px;border:1px solid #333;background:#fff"></div>
<div class="ab" style="left:142px;top:707px;width:5px;height:1px;background:#000"></div>
<div class="ab" style="left:144px;top:705px;width:1px;height:5px;background:#000"></div>
<div class="ab" style="left:149px;top:707px;width:4px;height:1px;background-image:linear-gradient(90deg,#777 50%,transparent 50%);background-size:2px 1px"></div>
<svg class="ab" style="left:154px;top:701px" width="14" height="12" viewBox="0 0 14 12"><path d="M0.5 2 Q0.5 0.8 1.7 0.8 H5 L6.3 2.2 H12.3 Q13.5 2.2 13.5 3.4 V10.5 Q13.5 11.5 12.3 11.5 H1.7 Q0.5 11.5 0.5 10.5 Z" fill="#000"/></svg>
<div class="t" style="left:170px;top:701px;font-size:11.1px;color:#111;overflow:hidden;width:197px"><span style="display:inline-block;transform:scaleX(1.012);transform-origin:0 0">CustomerA-Beijing DC</span></div>
<div class="ab" style="left:140px;top:721px;width:9px;height:9px;border:1px solid #333;background:#fff"></div>
<div class="ab" style="left:142px;top:725px;width:5px;height:1px;background:#000"></div>
<div class="ab" style="left:144px;top:723px;width:1px;height:5px;background:#000"></div>
<div class="ab" style="left:149px;top:725px;width:4px;height:1px;background-image:linear-gradient(90deg,#777 50%,transparent 50%);background-size:2px 1px"></div>
<svg class="ab" style="left:154px;top:719px" width="14" height="12" viewBox="0 0 14 12"><path d="M0.5 2 Q0.5 0.8 1.7 0.8 H5 L6.3 2.2 H12.3 Q13.5 2.2 13.5 3.4 V10.5 Q13.5 11.5 12.3 11.5 H1.7 Q0.5 11.5 0.5 10.5 Z" fill="#000"/></svg>
<div class="t" style="left:170px;top:719px;font-size:11.1px;color:#111;overflow:hidden;width:197px"><span style="display:inline-block;transform:scaleX(1.022);transform-origin:0 0">CustomerA-Brandon DC</span></div>
<div class="ab" style="left:144px;top:743px;width:9px;height:1px;background-image:linear-gradient(90deg,#777 50%,transparent 50%);background-size:2px 1px"></div>
<svg class="ab" style="left:155px;top:735px" width="12" height="15" viewBox="0 0 12 15"><path d="M0.5 0.5 H7.5 L11.5 4.5 V14.5 H0.5 Z" fill="#000"/><path d="M7.5 0.5 V4.5 H11.5" fill="#fff" stroke="#000" stroke-width="0.8"/><rect x="2.5" y="6.5" width="7" height="1.1" fill="#fff"/><rect x="2.5" y="9" width="7" height="1.1" fill="#fff"/><rect x="2.5" y="11.5" width="7" height="1.1" fill="#fff"/></svg>
<div class="t" style="left:172px;top:737px;font-size:11.1px;color:#111;overflow:hidden;width:195px"><span style="display:inline-block;transform:scaleX(1.009);transform-origin:0 0">Show More...</span></div>
<div class="ab" style="left:120px;top:773px;width:247px;height:14px;background:#f2f2f2;border-radius:0 0 0 5px"></div>
<div class="ab" style="left:137px;top:774px;width:196px;height:13px;background:#acacac"></div>
<svg class="ab" style="left:122px;top:776px" width="10" height="10"><path d="M7 1.5 L3 5 L7 8.5 Z" fill="#777"/></svg>
<svg class="ab" style="left:354px;top:776px" width="10" height="10"><path d="M3 1.5 L7 5 L3 8.5 Z" fill="#111"/></svg>
<div class="ab" style="left:372px;top:176px;width:1227px;height:2px;background:#0082a9"></div>
<div class="ab" style="left:374px;top:149px;width:119px;height:29px;background:#fff;border:2px solid #0082a9;border-bottom:none;border-radius:5px 5px 0 0"></div>
<div class="t" style="left:386.50px;top:157px;font-size:12.9px;color:#0082a9;"><span style="display:inline-block;transform:scaleX(1.0601);transform-origin:0 0">Shipping Times</span></div>
<div class="ab" style="left:495px;top:149px;width:118px;height:27px;background:#e9e9e9;border-radius:5px 5px 0 0"></div>
<div class="t" style="left:506.40px;top:157px;font-size:12.9px;color:#222;"><span style="display:inline-block;transform:scaleX(1.0127);transform-origin:0 0">Receiving Times</span></div>
<div class="ab" style="left:615px;top:149px;width:70px;height:27px;background:#e9e9e9;border-radius:5px 5px 0 0"></div>
<div class="t" style="left:626.50px;top:157px;font-size:12.9px;color:#222;"><span style="display:inline-block;transform:scaleX(1.0258);transform-origin:0 0">Settings</span></div>
<div class="ab" style="left:377px;top:191px;width:1217px;height:159px;border:1px solid #ddd;background:#fff"></div>
<div class="ab" style="left:378px;top:192px;width:1214px;height:24px;background:#0082a9"></div>
<div class="t" style="left:384.00px;top:198px;font-size:11.2px;font-weight:bold;color:#fff;"><span style="display:inline-block;transform:scaleX(0.9952);transform-origin:0 0">Shipping Times</span></div>
<div class="ab" style="left:378px;top:216px;width:1197px;height:26px;background:#0082a9;border-top:1px solid #006e8c;border-bottom:1px solid #006e8c"></div>
<div class="ab" style="left:412px;top:216px;width:1px;height:26px;background:#006e8c"></div>
<div class="ab" style="left:471px;top:216px;width:1px;height:26px;background:#006e8c"></div>
<div class="ab" style="left:654px;top:216px;width:1px;height:26px;background:#006e8c"></div>
<div class="ab" style="left:822px;top:216px;width:1px;height:26px;background:#006e8c"></div>
<div class="t" style="left:477.40px;top:223px;font-size:11.1px;font-weight:bold;color:#fff;"><span style="display:inline-block;transform:scaleX(1.0364);transform-origin:0 0">Name</span></div>
<div class="t" style="left:660.40px;top:223px;font-size:11.1px;font-weight:bold;color:#fff;"><span style="display:inline-block;transform:scaleX(1.0115);transform-origin:0 0">Effective Period Start Date</span></div>
<div class="t" style="left:828.40px;top:223px;font-size:11.1px;font-weight:bold;color:#fff;"><span style="display:inline-block;transform:scaleX(0.9896);transform-origin:0 0">Effective Period End Date</span></div>
<div class="ab" style="left:378px;top:242px;width:1180px;height:23px;background:#f7f7f7;border-bottom:1px solid #ddd"></div>
<div class="ab" style="left:412px;top:242px;width:1px;height:23px;background:#ddd"></div>
<div class="ab" style="left:471px;top:242px;width:1px;height:23px;background:#ddd"></div>
<div class="ab" style="left:654px;top:242px;width:1px;height:23px;background:#ddd"></div>
<div class="ab" style="left:822px;top:242px;width:1px;height:23px;background:#ddd"></div>
<svg class="ab" style="left:382px;top:246px" width="14" height="14"><circle cx="7" cy="7" r="6" fill="#fff" stroke="#444" stroke-width="1"/></svg>
<svg class="ab" style="left:418px;top:246px" width="15" height="15" viewBox="0 0 15 15"><path d="M3.3 3.3 L11.7 11.7 M11.7 3.3 L3.3 11.7" stroke="#000" stroke-width="3.4" stroke-linecap="round"/><path d="M3.3 3.3 L11.7 11.7 M11.7 3.3 L3.3 11.7" stroke="#fff" stroke-width="1.5" stroke-linecap="round"/></svg>
<div class="t" style="left:477.20px;top:247px;font-size:11px;color:#111;"><span style="display:inline-block;transform:scaleX(1.0000);transform-origin:0 0">Hour Range: Default</span></div>
<div class="t" style="left:660.20px;top:247px;font-size:11px;color:#111;"><span style="display:inline-block;transform:scaleX(0.9287);transform-origin:0 0">Jan 1, 2012</span></div>
<div class="t" style="left:828.20px;top:247px;font-size:11px;color:#111;"><span style="display:inline-block;transform:scaleX(0.9633);transform-origin:0 0">Dec 30, 2030</span></div>
<div class="ab" style="left:378px;top:265px;width:1180px;height:23px;background:#fdfdfd;border-bottom:1px solid #ddd"></div>
<div class="ab" style="left:412px;top:265px;width:1px;height:23px;background:#ddd"></div>
<div class="ab" style="left:471px;top:265px;width:1px;height:23px;background:#ddd"></div>
<div class="ab" style="left:654px;top:265px;width:1px;height:23px;background:#ddd"></div>
<div class="ab" style="left:822px;top:265px;width:1px;height:23px;background:#ddd"></div>
<svg class="ab" style="left:382px;top:269px" width="14" height="14"><circle cx="7" cy="7" r="6" fill="#fff" stroke="#444" stroke-width="1"/></svg>
<svg class="ab" style="left:418px;top:269px" width="15" height="15" viewBox="0 0 15 15"><path d="M3.3 3.3 L11.7 11.7 M11.7 3.3 L3.3 11.7" stroke="#000" stroke-width="3.4" stroke-linecap="round"/><path d="M3.3 3.3 L11.7 11.7 M11.7 3.3 L3.3 11.7" stroke="#fff" stroke-width="1.5" stroke-linecap="round"/></svg>
<div class="t" style="left:477.20px;top:270px;font-size:11px;color:#111;"><span style="display:inline-block;transform:scaleX(0.9830);transform-origin:0 0">Hour Range: Weekday Value</span></div>
<div class="t" style="left:660.20px;top:270px;font-size:11px;color:#111;"><span style="display:inline-block;transform:scaleX(0.9287);transform-origin:0 0">Jan 1, 2012</span></div>
<div class="t" style="left:828.20px;top:270px;font-size:11px;color:#111;"><span style="display:inline-block;transform:scaleX(0.9633);transform-origin:0 0">Dec 30, 2030</span></div>
<div class="ab" style="left:378px;top:288px;width:1180px;height:23px;background:#f7f7f7;border-bottom:1px solid #ddd"></div>
<div class="ab" style="left:412px;top:288px;width:1px;height:23px;background:#ddd"></div>
<div class="ab" style="left:471px;top:288px;width:1px;height:23px;background:#ddd"></div>
<div class="ab" style="left:654px;top:288px;width:1px;height:23px;background:#ddd"></div>
<div class="ab" style="left:822px;top:288px;width:1px;height:23px;background:#ddd"></div>
<svg class="ab" style="left:382px;top:292px" width="14" height="14"><circle cx="7" cy="7" r="6" fill="#fff" stroke="#444" stroke-width="1"/></svg>
<svg class="ab" style="left:418px;top:292px" width="15" height="15" viewBox="0 0 15 15"><path d="M3.3 3.3 L11.7 11.7 M11.7 3.3 L3.3 11.7" stroke="#000" stroke-width="3.4" stroke-linecap="round"/><path d="M3.3 3.3 L11.7 11.7 M11.7 3.3 L3.3 11.7" stroke="#fff" stroke-width="1.5" stroke-linecap="round"/></svg>
<div class="t" style="left:477.20px;top:293px;font-size:11px;color:#111;"><span style="display:inline-block;transform:scaleX(1.0054);transform-origin:0 0">Hour Range: Day of Month</span></div>
<div class="t" style="left:660.20px;top:293px;font-size:11px;color:#111;"><span style="display:inline-block;transform:scaleX(0.9287);transform-origin:0 0">Jan 1, 2012</span></div>
<div class="t" style="left:828.20px;top:293px;font-size:11px;color:#111;"><span style="display:inline-block;transform:scaleX(0.9633);transform-origin:0 0">Nov 30, 2030</span></div>
<div class="ab" style="left:378px;top:311px;width:1180px;height:21px;background:#fdfdfd"></div>
<div class="ab" style="left:1558px;top:242px;width:17px;height:90px;background:#f1f1f1"></div>
<svg class="ab" style="left:1561px;top:245px" width="10" height="10"><path d="M1.5 7 L5 3 L8.5 7 Z" fill="#777"/></svg>
<svg class="ab" style="left:1561px;top:318px" width="10" height="10"><path d="M1.5 3 L5 7 L8.5 3 Z" fill="#777"/></svg>
<div class="ab" style="left:378px;top:332px;width:1180px;height:17px;background:#f1f1f1"></div>
<div class="ab" style="left:1558px;top:332px;width:17px;height:17px;background:#dcdcdc"></div>
<div class="ab" style="left:395px;top:334px;width:965px;height:13px;background:#b3b3b3"></div>
<svg class="ab" style="left:381px;top:335px" width="10" height="10"><path d="M7 1.5 L3 5 L7 8.5 Z" fill="#777"/></svg>
<svg class="ab" style="left:1545px;top:335px" width="10" height="10"><path d="M3 1.5 L7 5 L3 8.5 Z" fill="#111"/></svg>
<div class="ab" style="left:378px;top:351px;width:1217px;height:8px;background:#0082a9"></div>
<div class="ab" style="left:377px;top:361px;width:1219px;height:364px;border:1px solid #1a1a1a;border-bottom-width:2px;background:#fff"></div>
<div class="t" style="left:458.5px;top:370px;font-size:11.3px;font-weight:bold;color:#8b0000">*</div>
<div class="t" style="left:467.80px;top:370px;font-size:11.3px;font-weight:bold;color:#111;"><span style="display:inline-block;transform:scaleX(0.9855);transform-origin:0 0">Name:</span></div>
<div class="t" style="left:380.5px;top:398px;font-size:11.3px;font-weight:bold;color:#8b0000">*</div>
<div class="t" style="left:389.60px;top:398px;font-size:11.3px;font-weight:bold;color:#111;"><span style="display:inline-block;transform:scaleX(0.9656);transform-origin:0 0">Effective Date Range:</span></div>
<div class="ab" style="left:509px;top:366px;width:204px;height:22px;border:1px solid #aaa;border-radius:2px;background:#fff"></div>
<div class="ab" style="left:509px;top:394px;width:108px;height:22px;border:1px solid #aaa;border-radius:2px;background:#fff"></div>
<div class="ab" style="left:652px;top:394px;width:108px;height:22px;border:1px solid #aaa;border-radius:2px;background:#fff"></div>
<svg class="ab" style="left:620px;top:397px" width="16" height="16" viewBox="0 0 16 16"><rect x="1" y="2.5" width="14" height="12.5" rx="2" fill="none" stroke="#111" stroke-width="1.8"/><rect x="1" y="2.5" width="14" height="3.5" fill="#111"/><rect x="3.5" y="0.5" width="2" height="3" fill="#111"/><rect x="10.5" y="0.5" width="2" height="3" fill="#111"/><g fill="#111"><rect x="3.5" y="7.5" width="2" height="2"/><rect x="7" y="7.5" width="2" height="2"/><rect x="10.5" y="7.5" width="2" height="2"/><rect x="3.5" y="11" width="2" height="2"/><rect x="7" y="11" width="2" height="2"/><rect x="10.5" y="11" width="2" height="2"/></g></svg>
<div class="t" style="left:638px;top:398px;font-size:11.3px;color:#222">to</div>
<svg class="ab" style="left:763px;top:397px" width="16" height="16" viewBox="0 0 16 16"><rect x="1" y="2.5" width="14" height="12.5" rx="2" fill="none" stroke="#111" stroke-width="1.8"/><rect x="1" y="2.5" width="14" height="3.5" fill="#111"/><rect x="3.5" y="0.5" width="2" height="3" fill="#111"/><rect x="10.5" y="0.5" width="2" height="3" fill="#111"/><g fill="#111"><rect x="3.5" y="7.5" width="2" height="2"/><rect x="7" y="7.5" width="2" height="2"/><rect x="10.5" y="7.5" width="2" height="2"/><rect x="3.5" y="11" width="2" height="2"/><rect x="7" y="11" width="2" height="2"/><rect x="10.5" y="11" width="2" height="2"/></g></svg>
<div class="ab" style="left:378px;top:422px;width:1199px;height:26px;background:#0082a9;border-bottom:1px solid #006e8c"></div>
<div class="ab" style="left:511px;top:422px;width:1px;height:26px;background:#006e8c"></div>
<div class="ab" style="left:548px;top:422px;width:1px;height:26px;background:#006e8c"></div>
<div class="ab" style="left:657px;top:422px;width:1px;height:26px;background:#006e8c"></div>
<div class="ab" style="left:766px;top:422px;width:1px;height:26px;background:#006e8c"></div>
<div class="ab" style="left:876px;top:422px;width:1px;height:26px;background:#006e8c"></div>
<div class="ab" style="left:986px;top:422px;width:1px;height:26px;background:#006e8c"></div>
<div class="ab" style="left:1559px;top:422px;width:1px;height:26px;background:#0a6a86"></div>
<div class="t" style="left:383.40px;top:429px;font-size:11.1px;font-weight:bold;color:#fff;"><span style="display:inline-block;transform:scaleX(0.9985);transform-origin:0 0">Day Of Week</span></div>
<div class="t" style="left:553px;top:429px;font-size:12px;font-weight:bold;color:#7a0000">*</div>
<div class="t" style="left:561.70px;top:429px;font-size:11.1px;font-weight:bold;color:#fff;"><span style="display:inline-block;transform:scaleX(1.0102);transform-origin:0 0">Start Day</span></div>
<div class="t" style="left:662px;top:429px;font-size:12px;font-weight:bold;color:#7a0000">*</div>
<div class="t" style="left:670.40px;top:429px;font-size:11.1px;font-weight:bold;color:#fff;"><span style="display:inline-block;transform:scaleX(1.0333);transform-origin:0 0">Start Time</span></div>
<div class="t" style="left:772px;top:429px;font-size:12px;font-weight:bold;color:#7a0000">*</div>
<div class="t" style="left:780.90px;top:429px;font-size:11.1px;font-weight:bold;color:#fff;"><span style="display:inline-block;transform:scaleX(0.9662);transform-origin:0 0">End Day</span></div>
<div class="t" style="left:882px;top:429px;font-size:12px;font-weight:bold;color:#7a0000">*</div>
<div class="t" style="left:890.80px;top:429px;font-size:11.1px;font-weight:bold;color:#fff;"><span style="display:inline-block;transform:scaleX(0.9719);transform-origin:0 0">End Time</span></div>
<div class="ab" style="left:378px;top:448px;width:1181px;height:232px;overflow:hidden">
<div class="ab" style="left:0;top:0px;width:1181px;height:32px;background:#f7f7f7;border-bottom:1px solid #ddd"></div>
<div class="ab" style="left:133px;top:0px;width:1px;height:32px;background:#ddd"></div>
<div class="ab" style="left:169px;top:0px;width:1px;height:32px;background:#ddd"></div>
<div class="ab" style="left:278px;top:0px;width:1px;height:32px;background:#ddd"></div>
<div class="ab" style="left:387px;top:0px;width:1px;height:32px;background:#ddd"></div>
<div class="ab" style="left:497px;top:0px;width:1px;height:32px;background:#ddd"></div>
<div class="ab" style="left:607px;top:0px;width:1px;height:32px;background:#ddd"></div>
<div class="t" style="left:5.30px;top:5px;font-size:11.1px;font-weight:bold;color:#111;"><span style="display:inline-block;transform:scaleX(0.9651);transform-origin:0 0">Sunday</span></div>
<svg class="ab" style="left:114px;top:9px" width="11" height="11" viewBox="0 0 11 11"><path d="M3 0 H8 V3 H11 V8 H8 V11 H3 V8 H0 V3 H3 Z" fill="#0a0a3a"/><path d="M4 1 H7 V4 H10 V7 H7 V10 H4 V7 H1 V4 H4 Z" fill="#8484cc"/><rect x="4.5" y="1.5" width="2" height="3" fill="#a8b4f0"/><rect x="1" y="4" width="9" height="1" fill="#a0a8e8"/></svg>
<svg class="ab" style="left:140px;top:4px" width="14" height="14" viewBox="0 0 14 14"><path d="M3.4 3.4 L10.6 10.6 M10.6 3.4 L3.4 10.6" stroke="#000" stroke-width="3.3" stroke-linecap="round"/><path d="M3.4 3.4 L10.6 10.6 M10.6 3.4 L3.4 10.6" stroke="#fafaf0" stroke-width="1.4" stroke-linecap="round"/></svg>
<div class="ab" style="left:175px;top:4px;width:83px;height:24px;border:1px solid #8a8a8a;border-radius:3px;background:#fff"></div>
<div class="t" style="left:182.40px;top:10px;font-size:12.8px;color:#111;"><span style="display:inline-block;transform:scaleX(0.9444);transform-origin:0 0">Today</span></div>
<svg class="ab" style="left:243px;top:12px" width="11" height="9" viewBox="0 0 11 9"><path d="M1.5 2 L5.5 6 L9.5 2" fill="none" stroke="#000" stroke-width="2.4"/></svg>
<div class="ab" style="left:284px;top:4px;width:70px;height:22px;border:1px solid #aaa;border-radius:2px;background:#fff"></div>
<svg class="ab" style="left:357px;top:7px" width="16" height="16" viewBox="0 0 16 16"><defs><linearGradient id="cg" x1="0.3" y1="0.3" x2="0.6" y2="1"><stop offset="0.45" stop-color="#f4f4f4"/><stop offset="1" stop-color="#6a6a6a"/></linearGradient></defs><path d="M5 0.8 H11 L15.2 5 V11 L11 15.2 H5 L0.8 11 V5 Z" fill="url(#cg)" stroke="#5050b0" stroke-width="1.4"/><path d="M8 1.6 H10.6 L14.4 5.4 V8 H8 Z" fill="#8c8cd8"/><path d="M8 1.6 V8.6 M7.4 8 H14.6 M14.4 8 V5.4 L10.8 1.8" fill="none" stroke="#050520" stroke-width="1.3"/><path d="M6 8.5 H8" stroke="#000" stroke-width="1.3"/></svg>
<div class="ab" style="left:393px;top:4px;width:86px;height:24px;border:1px solid #8a8a8a;border-radius:3px;background:#fff"></div>
<div class="t" style="left:400.40px;top:10px;font-size:12.8px;color:#111;"><span style="display:inline-block;transform:scaleX(0.9444);transform-origin:0 0">Today</span></div>
<svg class="ab" style="left:464px;top:12px" width="11" height="9" viewBox="0 0 11 9"><path d="M1.5 2 L5.5 6 L9.5 2" fill="none" stroke="#000" stroke-width="2.4"/></svg>
<div class="ab" style="left:503px;top:4px;width:70px;height:22px;border:1px solid #aaa;border-radius:2px;background:#fff"></div>
<svg class="ab" style="left:576px;top:7px" width="16" height="16" viewBox="0 0 16 16"><defs><linearGradient id="cg" x1="0.3" y1="0.3" x2="0.6" y2="1"><stop offset="0.45" stop-color="#f4f4f4"/><stop offset="1" stop-color="#6a6a6a"/></linearGradient></defs><path d="M5 0.8 H11 L15.2 5 V11 L11 15.2 H5 L0.8 11 V5 Z" fill="url(#cg)" stroke="#5050b0" stroke-width="1.4"/><path d="M8 1.6 H10.6 L14.4 5.4 V8 H8 Z" fill="#8c8cd8"/><path d="M8 1.6 V8.6 M7.4 8 H14.6 M14.4 8 V5.4 L10.8 1.8" fill="none" stroke="#050520" stroke-width="1.3"/><path d="M6 8.5 H8" stroke="#000" stroke-width="1.3"/></svg>
<svg class="ab" style="left:614px;top:4px" width="16" height="17" viewBox="0 0 16 17"><rect x="0.5" y="1.5" width="7" height="12" fill="#f2f2f2" stroke="#222"/><path d="M5.5 3.5 H11.5 L14.5 6.5 V15.5 H5.5 Z" fill="#f6f6ee" stroke="#222"/><path d="M11.5 3.5 V6.5 H14.5" fill="#e8d890" stroke="#222" stroke-width="0.9"/><g fill="#0f7070"><rect x="2" y="4" width="3" height="1"/><rect x="2" y="6" width="3" height="1"/><rect x="2" y="8" width="3" height="1"/><rect x="2" y="10" width="3" height="1"/><rect x="7" y="6" width="4" height="1"/><rect x="7" y="8" width="6" height="1"/><rect x="7" y="10" width="6" height="1"/><rect x="7" y="12" width="6" height="1"/></g></svg>
<svg class="ab" style="left:636px;top:4px" width="15" height="17" viewBox="0 0 15 17"><rect x="0.5" y="2.5" width="11" height="12.5" rx="1" fill="#c89a10" stroke="#0a0a20"/><rect x="3" y="0.5" width="6" height="3" rx="1.5" fill="#223" stroke="#0a0a20" stroke-width="0.8"/><rect x="3" y="3" width="6" height="1.2" fill="#888"/><path d="M6.5 6.5 H11.5 L13.5 8.5 V15.5 H6.5 Z" fill="#f2f2f2" stroke="#111"/><g fill="#0f7070"><rect x="8" y="8" width="3" height="1"/><rect x="8" y="10" width="4" height="1"/><rect x="8" y="12" width="4" height="1"/></g></svg>
<div class="ab" style="left:0;top:32px;width:1181px;height:32px;background:#f7f7f7;border-bottom:1px solid #ddd"></div>
<div class="ab" style="left:133px;top:32px;width:1px;height:32px;background:#ddd"></div>
<div class="ab" style="left:169px;top:32px;width:1px;height:32px;background:#ddd"></div>
<div class="ab" style="left:278px;top:32px;width:1px;height:32px;background:#ddd"></div>
<div class="ab" style="left:387px;top:32px;width:1px;height:32px;background:#ddd"></div>
<div class="ab" style="left:497px;top:32px;width:1px;height:32px;background:#ddd"></div>
<div class="ab" style="left:607px;top:32px;width:1px;height:32px;background:#ddd"></div>
<svg class="ab" style="left:140px;top:36px" width="14" height="14" viewBox="0 0 14 14"><path d="M3.4 3.4 L10.6 10.6 M10.6 3.4 L3.4 10.6" stroke="#000" stroke-width="3.3" stroke-linecap="round"/><path d="M3.4 3.4 L10.6 10.6 M10.6 3.4 L3.4 10.6" stroke="#fafaf0" stroke-width="1.4" stroke-linecap="round"/></svg>
<div class="ab" style="left:175px;top:36px;width:83px;height:24px;border:1px solid #8a8a8a;border-radius:3px;background:#fff"></div>
<div class="t" style="left:182.40px;top:42px;font-size:12.8px;color:#111;"><span style="display:inline-block;transform:scaleX(0.9444);transform-origin:0 0">Today</span></div>
<svg class="ab" style="left:243px;top:44px" width="11" height="9" viewBox="0 0 11 9"><path d="M1.5 2 L5.5 6 L9.5 2" fill="none" stroke="#000" stroke-width="2.4"/></svg>
<div class="ab" style="left:284px;top:36px;width:70px;height:22px;border:1px solid #aaa;border-radius:2px;background:#fff"></div>
<svg class="ab" style="left:357px;top:39px" width="16" height="16" viewBox="0 0 16 16"><defs><linearGradient id="cg" x1="0.3" y1="0.3" x2="0.6" y2="1"><stop offset="0.45" stop-color="#f4f4f4"/><stop offset="1" stop-color="#6a6a6a"/></linearGradient></defs><path d="M5 0.8 H11 L15.2 5 V11 L11 15.2 H5 L0.8 11 V5 Z" fill="url(#cg)" stroke="#5050b0" stroke-width="1.4"/><path d="M8 1.6 H10.6 L14.4 5.4 V8 H8 Z" fill="#8c8cd8"/><path d="M8 1.6 V8.6 M7.4 8 H14.6 M14.4 8 V5.4 L10.8 1.8" fill="none" stroke="#050520" stroke-width="1.3"/><path d="M6 8.5 H8" stroke="#000" stroke-width="1.3"/></svg>
<div class="ab" style="left:393px;top:36px;width:86px;height:24px;border:1px solid #8a8a8a;border-radius:3px;background:#fff"></div>
<div class="t" style="left:400.40px;top:42px;font-size:12.8px;color:#111;"><span style="display:inline-block;transform:scaleX(0.9444);transform-origin:0 0">Today</span></div>
<svg class="ab" style="left:464px;top:44px" width="11" height="9" viewBox="0 0 11 9"><path d="M1.5 2 L5.5 6 L9.5 2" fill="none" stroke="#000" stroke-width="2.4"/></svg>
<div class="ab" style="left:503px;top:36px;width:70px;height:22px;border:1px solid #aaa;border-radius:2px;background:#fff"></div>
<svg class="ab" style="left:576px;top:39px" width="16" height="16" viewBox="0 0 16 16"><defs><linearGradient id="cg" x1="0.3" y1="0.3" x2="0.6" y2="1"><stop offset="0.45" stop-color="#f4f4f4"/><stop offset="1" stop-color="#6a6a6a"/></linearGradient></defs><path d="M5 0.8 H11 L15.2 5 V11 L11 15.2 H5 L0.8 11 V5 Z" fill="url(#cg)" stroke="#5050b0" stroke-width="1.4"/><path d="M8 1.6 H10.6 L14.4 5.4 V8 H8 Z" fill="#8c8cd8"/><path d="M8 1.6 V8.6 M7.4 8 H14.6 M14.4 8 V5.4 L10.8 1.8" fill="none" stroke="#050520" stroke-width="1.3"/><path d="M6 8.5 H8" stroke="#000" stroke-width="1.3"/></svg>
<svg class="ab" style="left:614px;top:36px" width="16" height="17" viewBox="0 0 16 17"><rect x="0.5" y="1.5" width="7" height="12" fill="#f2f2f2" stroke="#222"/><path d="M5.5 3.5 H11.5 L14.5 6.5 V15.5 H5.5 Z" fill="#f6f6ee" stroke="#222"/><path d="M11.5 3.5 V6.5 H14.5" fill="#e8d890" stroke="#222" stroke-width="0.9"/><g fill="#0f7070"><rect x="2" y="4" width="3" height="1"/><rect x="2" y="6" width="3" height="1"/><rect x="2" y="8" width="3" height="1"/><rect x="2" y="10" width="3" height="1"/><rect x="7" y="6" width="4" height="1"/><rect x="7" y="8" width="6" height="1"/><rect x="7" y="10" width="6" height="1"/><rect x="7" y="12" width="6" height="1"/></g></svg>
<svg class="ab" style="left:636px;top:36px" width="15" height="17" viewBox="0 0 15 17"><rect x="0.5" y="2.5" width="11" height="12.5" rx="1" fill="#c89a10" stroke="#0a0a20"/><rect x="3" y="0.5" width="6" height="3" rx="1.5" fill="#223" stroke="#0a0a20" stroke-width="0.8"/><rect x="3" y="3" width="6" height="1.2" fill="#888"/><path d="M6.5 6.5 H11.5 L13.5 8.5 V15.5 H6.5 Z" fill="#f2f2f2" stroke="#111"/><g fill="#0f7070"><rect x="8" y="8" width="3" height="1"/><rect x="8" y="10" width="4" height="1"/><rect x="8" y="12" width="4" height="1"/></g></svg>
<div class="ab" style="left:0;top:64px;width:1181px;height:32px;background:#fdfdfd;border-bottom:1px solid #ddd"></div>
<div class="ab" style="left:133px;top:64px;width:1px;height:32px;background:#ddd"></div>
<div class="ab" style="left:169px;top:64px;width:1px;height:32px;background:#ddd"></div>
<div class="ab" style="left:278px;top:64px;width:1px;height:32px;background:#ddd"></div>
<div class="ab" style="left:387px;top:64px;width:1px;height:32px;background:#ddd"></div>
<div class="ab" style="left:497px;top:64px;width:1px;height:32px;background:#ddd"></div>
<div class="ab" style="left:607px;top:64px;width:1px;height:32px;background:#ddd"></div>
<div class="t" style="left:5.30px;top:69px;font-size:11.1px;font-weight:bold;color:#111;"><span style="display:inline-block;transform:scaleX(1.0119);transform-origin:0 0">Monday</span></div>
<svg class="ab" style="left:114px;top:73px" width="11" height="11" viewBox="0 0 11 11"><path d="M3 0 H8 V3 H11 V8 H8 V11 H3 V8 H0 V3 H3 Z" fill="#0a0a3a"/><path d="M4 1 H7 V4 H10 V7 H7 V10 H4 V7 H1 V4 H4 Z" fill="#8484cc"/><rect x="4.5" y="1.5" width="2" height="3" fill="#a8b4f0"/><rect x="1" y="4" width="9" height="1" fill="#a0a8e8"/></svg>
<svg class="ab" style="left:140px;top:68px" width="14" height="14" viewBox="0 0 14 14"><path d="M3.4 3.4 L10.6 10.6 M10.6 3.4 L3.4 10.6" stroke="#000" stroke-width="3.3" stroke-linecap="round"/><path d="M3.4 3.4 L10.6 10.6 M10.6 3.4 L3.4 10.6" stroke="#fafaf0" stroke-width="1.4" stroke-linecap="round"/></svg>
<div class="ab" style="left:175px;top:68px;width:83px;height:24px;border:1px solid #8a8a8a;border-radius:3px;background:#fff"></div>
<div class="t" style="left:182.40px;top:74px;font-size:12.8px;color:#111;"><span style="display:inline-block;transform:scaleX(0.9444);transform-origin:0 0">Today</span></div>
<svg class="ab" style="left:243px;top:76px" width="11" height="9" viewBox="0 0 11 9"><path d="M1.5 2 L5.5 6 L9.5 2" fill="none" stroke="#000" stroke-width="2.4"/></svg>
<div class="ab" style="left:284px;top:68px;width:70px;height:22px;border:1px solid #aaa;border-radius:2px;background:#fff"></div>
<svg class="ab" style="left:357px;top:71px" width="16" height="16" viewBox="0 0 16 16"><defs><linearGradient id="cg" x1="0.3" y1="0.3" x2="0.6" y2="1"><stop offset="0.45" stop-color="#f4f4f4"/><stop offset="1" stop-color="#6a6a6a"/></linearGradient></defs><path d="M5 0.8 H11 L15.2 5 V11 L11 15.2 H5 L0.8 11 V5 Z" fill="url(#cg)" stroke="#5050b0" stroke-width="1.4"/><path d="M8 1.6 H10.6 L14.4 5.4 V8 H8 Z" fill="#8c8cd8"/><path d="M8 1.6 V8.6 M7.4 8 H14.6 M14.4 8 V5.4 L10.8 1.8" fill="none" stroke="#050520" stroke-width="1.3"/><path d="M6 8.5 H8" stroke="#000" stroke-width="1.3"/></svg>
<div class="ab" style="left:393px;top:68px;width:86px;height:24px;border:1px solid #8a8a8a;border-radius:3px;background:#fff"></div>
<div class="t" style="left:400.40px;top:74px;font-size:12.8px;color:#111;"><span style="display:inline-block;transform:scaleX(0.9444);transform-origin:0 0">Today</span></div>
<svg class="ab" style="left:464px;top:76px" width="11" height="9" viewBox="0 0 11 9"><path d="M1.5 2 L5.5 6 L9.5 2" fill="none" stroke="#000" stroke-width="2.4"/></svg>
<div class="ab" style="left:503px;top:68px;width:70px;height:22px;border:1px solid #aaa;border-radius:2px;background:#fff"></div>
<svg class="ab" style="left:576px;top:71px" width="16" height="16" viewBox="0 0 16 16"><defs><linearGradient id="cg" x1="0.3" y1="0.3" x2="0.6" y2="1"><stop offset="0.45" stop-color="#f4f4f4"/><stop offset="1" stop-color="#6a6a6a"/></linearGradient></defs><path d="M5 0.8 H11 L15.2 5 V11 L11 15.2 H5 L0.8 11 V5 Z" fill="url(#cg)" stroke="#5050b0" stroke-width="1.4"/><path d="M8 1.6 H10.6 L14.4 5.4 V8 H8 Z" fill="#8c8cd8"/><path d="M8 1.6 V8.6 M7.4 8 H14.6 M14.4 8 V5.4 L10.8 1.8" fill="none" stroke="#050520" stroke-width="1.3"/><path d="M6 8.5 H8" stroke="#000" stroke-width="1.3"/></svg>
<svg class="ab" style="left:614px;top:68px" width="16" height="17" viewBox="0 0 16 17"><rect x="0.5" y="1.5" width="7" height="12" fill="#f2f2f2" stroke="#222"/><path d="M5.5 3.5 H11.5 L14.5 6.5 V15.5 H5.5 Z" fill="#f6f6ee" stroke="#222"/><path d="M11.5 3.5 V6.5 H14.5" fill="#e8d890" stroke="#222" stroke-width="0.9"/><g fill="#0f7070"><rect x="2" y="4" width="3" height="1"/><rect x="2" y="6" width="3" height="1"/><rect x="2" y="8" width="3" height="1"/><rect x="2" y="10" width="3" height="1"/><rect x="7" y="6" width="4" height="1"/><rect x="7" y="8" width="6" height="1"/><rect x="7" y="10" width="6" height="1"/><rect x="7" y="12" width="6" height="1"/></g></svg>
<svg class="ab" style="left:636px;top:68px" width="15" height="17" viewBox="0 0 15 17"><rect x="0.5" y="2.5" width="11" height="12.5" rx="1" fill="#c89a10" stroke="#0a0a20"/><rect x="3" y="0.5" width="6" height="3" rx="1.5" fill="#223" stroke="#0a0a20" stroke-width="0.8"/><rect x="3" y="3" width="6" height="1.2" fill="#888"/><path d="M6.5 6.5 H11.5 L13.5 8.5 V15.5 H6.5 Z" fill="#f2f2f2" stroke="#111"/><g fill="#0f7070"><rect x="8" y="8" width="3" height="1"/><rect x="8" y="10" width="4" height="1"/><rect x="8" y="12" width="4" height="1"/></g></svg>
<div class="ab" style="left:0;top:96px;width:1181px;height:32px;background:#f7f7f7;border-bottom:1px solid #ddd"></div>
<div class="ab" style="left:133px;top:96px;width:1px;height:32px;background:#ddd"></div>
<div class="ab" style="left:169px;top:96px;width:1px;height:32px;background:#ddd"></div>
<div class="ab" style="left:278px;top:96px;width:1px;height:32px;background:#ddd"></div>
<div class="ab" style="left:387px;top:96px;width:1px;height:32px;background:#ddd"></div>
<div class="ab" style="left:497px;top:96px;width:1px;height:32px;background:#ddd"></div>
<div class="ab" style="left:607px;top:96px;width:1px;height:32px;background:#ddd"></div>
<div class="t" style="left:5.30px;top:101px;font-size:11.1px;font-weight:bold;color:#111;"><span style="display:inline-block;transform:scaleX(0.9796);transform-origin:0 0">Tuesday</span></div>
<svg class="ab" style="left:114px;top:105px" width="11" height="11" viewBox="0 0 11 11"><path d="M3 0 H8 V3 H11 V8 H8 V11 H3 V8 H0 V3 H3 Z" fill="#0a0a3a"/><path d="M4 1 H7 V4 H10 V7 H7 V10 H4 V7 H1 V4 H4 Z" fill="#8484cc"/><rect x="4.5" y="1.5" width="2" height="3" fill="#a8b4f0"/><rect x="1" y="4" width="9" height="1" fill="#a0a8e8"/></svg>
<svg class="ab" style="left:140px;top:100px" width="14" height="14" viewBox="0 0 14 14"><path d="M3.4 3.4 L10.6 10.6 M10.6 3.4 L3.4 10.6" stroke="#000" stroke-width="3.3" stroke-linecap="round"/><path d="M3.4 3.4 L10.6 10.6 M10.6 3.4 L3.4 10.6" stroke="#fafaf0" stroke-width="1.4" stroke-linecap="round"/></svg>
<div class="ab" style="left:175px;top:100px;width:83px;height:24px;border:1px solid #8a8a8a;border-radius:3px;background:#fff"></div>
<div class="t" style="left:182.40px;top:106px;font-size:12.8px;color:#111;"><span style="display:inline-block;transform:scaleX(0.9444);transform-origin:0 0">Today</span></div>
<svg class="ab" style="left:243px;top:108px" width="11" height="9" viewBox="0 0 11 9"><path d="M1.5 2 L5.5 6 L9.5 2" fill="none" stroke="#000" stroke-width="2.4"/></svg>
<div class="ab" style="left:284px;top:100px;width:70px;height:22px;border:1px solid #aaa;border-radius:2px;background:#fff"></div>
<svg class="ab" style="left:357px;top:103px" width="16" height="16" viewBox="0 0 16 16"><defs><linearGradient id="cg" x1="0.3" y1="0.3" x2="0.6" y2="1"><stop offset="0.45" stop-color="#f4f4f4"/><stop offset="1" stop-color="#6a6a6a"/></linearGradient></defs><path d="M5 0.8 H11 L15.2 5 V11 L11 15.2 H5 L0.8 11 V5 Z" fill="url(#cg)" stroke="#5050b0" stroke-width="1.4"/><path d="M8 1.6 H10.6 L14.4 5.4 V8 H8 Z" fill="#8c8cd8"/><path d="M8 1.6 V8.6 M7.4 8 H14.6 M14.4 8 V5.4 L10.8 1.8" fill="none" stroke="#050520" stroke-width="1.3"/><path d="M6 8.5 H8" stroke="#000" stroke-width="1.3"/></svg>
<div class="ab" style="left:393px;top:100px;width:86px;height:24px;border:1px solid #8a8a8a;border-radius:3px;background:#fff"></div>
<div class="t" style="left:400.40px;top:106px;font-size:12.8px;color:#111;"><span style="display:inline-block;transform:scaleX(0.9444);transform-origin:0 0">Today</span></div>
<svg class="ab" style="left:464px;top:108px" width="11" height="9" viewBox="0 0 11 9"><path d="M1.5 2 L5.5 6 L9.5 2" fill="none" stroke="#000" stroke-width="2.4"/></svg>
<div class="ab" style="left:503px;top:100px;width:70px;height:22px;border:1px solid #aaa;border-radius:2px;background:#fff"></div>
<svg class="ab" style="left:576px;top:103px" width="16" height="16" viewBox="0 0 16 16"><defs><linearGradient id="cg" x1="0.3" y1="0.3" x2="0.6" y2="1"><stop offset="0.45" stop-color="#f4f4f4"/><stop offset="1" stop-color="#6a6a6a"/></linearGradient></defs><path d="M5 0.8 H11 L15.2 5 V11 L11 15.2 H5 L0.8 11 V5 Z" fill="url(#cg)" stroke="#5050b0" stroke-width="1.4"/><path d="M8 1.6 H10.6 L14.4 5.4 V8 H8 Z" fill="#8c8cd8"/><path d="M8 1.6 V8.6 M7.4 8 H14.6 M14.4 8 V5.4 L10.8 1.8" fill="none" stroke="#050520" stroke-width="1.3"/><path d="M6 8.5 H8" stroke="#000" stroke-width="1.3"/></svg>
<svg class="ab" style="left:614px;top:100px" width="16" height="17" viewBox="0 0 16 17"><rect x="0.5" y="1.5" width="7" height="12" fill="#f2f2f2" stroke="#222"/><path d="M5.5 3.5 H11.5 L14.5 6.5 V15.5 H5.5 Z" fill="#f6f6ee" stroke="#222"/><path d="M11.5 3.5 V6.5 H14.5" fill="#e8d890" stroke="#222" stroke-width="0.9"/><g fill="#0f7070"><rect x="2" y="4" width="3" height="1"/><rect x="2" y="6" width="3" height="1"/><rect x="2" y="8" width="3" height="1"/><rect x="2" y="10" width="3" height="1"/><rect x="7" y="6" width="4" height="1"/><rect x="7" y="8" width="6" height="1"/><rect x="7" y="10" width="6" height="1"/><rect x="7" y="12" width="6" height="1"/></g></svg>
<svg class="ab" style="left:636px;top:100px" width="15" height="17" viewBox="0 0 15 17"><rect x="0.5" y="2.5" width="11" height="12.5" rx="1" fill="#c89a10" stroke="#0a0a20"/><rect x="3" y="0.5" width="6" height="3" rx="1.5" fill="#223" stroke="#0a0a20" stroke-width="0.8"/><rect x="3" y="3" width="6" height="1.2" fill="#888"/><path d="M6.5 6.5 H11.5 L13.5 8.5 V15.5 H6.5 Z" fill="#f2f2f2" stroke="#111"/><g fill="#0f7070"><rect x="8" y="8" width="3" height="1"/><rect x="8" y="10" width="4" height="1"/><rect x="8" y="12" width="4" height="1"/></g></svg>
<div class="ab" style="left:0;top:128px;width:1181px;height:32px;background:#fdfdfd;border-bottom:1px solid #ddd"></div>
<div class="ab" style="left:133px;top:128px;width:1px;height:32px;background:#ddd"></div>
<div class="ab" style="left:169px;top:128px;width:1px;height:32px;background:#ddd"></div>
<div class="ab" style="left:278px;top:128px;width:1px;height:32px;background:#ddd"></div>
<div class="ab" style="left:387px;top:128px;width:1px;height:32px;background:#ddd"></div>
<div class="ab" style="left:497px;top:128px;width:1px;height:32px;background:#ddd"></div>
<div class="ab" style="left:607px;top:128px;width:1px;height:32px;background:#ddd"></div>
<div class="t" style="left:5.30px;top:133px;font-size:11.1px;font-weight:bold;color:#111;"><span style="display:inline-block;transform:scaleX(0.9837);transform-origin:0 0">Wednesday</span></div>
<svg class="ab" style="left:114px;top:137px" width="11" height="11" viewBox="0 0 11 11"><path d="M3 0 H8 V3 H11 V8 H8 V11 H3 V8 H0 V3 H3 Z" fill="#0a0a3a"/><path d="M4 1 H7 V4 H10 V7 H7 V10 H4 V7 H1 V4 H4 Z" fill="#8484cc"/><rect x="4.5" y="1.5" width="2" height="3" fill="#a8b4f0"/><rect x="1" y="4" width="9" height="1" fill="#a0a8e8"/></svg>
<svg class="ab" style="left:140px;top:132px" width="14" height="14" viewBox="0 0 14 14"><path d="M3.4 3.4 L10.6 10.6 M10.6 3.4 L3.4 10.6" stroke="#000" stroke-width="3.3" stroke-linecap="round"/><path d="M3.4 3.4 L10.6 10.6 M10.6 3.4 L3.4 10.6" stroke="#fafaf0" stroke-width="1.4" stroke-linecap="round"/></svg>
<div class="ab" style="left:175px;top:132px;width:83px;height:24px;border:1px solid #8a8a8a;border-radius:3px;background:#fff"></div>
<div class="t" style="left:182.40px;top:138px;font-size:12.8px;color:#111;"><span style="display:inline-block;transform:scaleX(0.9444);transform-origin:0 0">Today</span></div>
<svg class="ab" style="left:243px;top:140px" width="11" height="9" viewBox="0 0 11 9"><path d="M1.5 2 L5.5 6 L9.5 2" fill="none" stroke="#000" stroke-width="2.4"/></svg>
<div class="ab" style="left:284px;top:132px;width:70px;height:22px;border:1px solid #aaa;border-radius:2px;background:#fff"></div>
<svg class="ab" style="left:357px;top:135px" width="16" height="16" viewBox="0 0 16 16"><defs><linearGradient id="cg" x1="0.3" y1="0.3" x2="0.6" y2="1"><stop offset="0.45" stop-color="#f4f4f4"/><stop offset="1" stop-color="#6a6a6a"/></linearGradient></defs><path d="M5 0.8 H11 L15.2 5 V11 L11 15.2 H5 L0.8 11 V5 Z" fill="url(#cg)" stroke="#5050b0" stroke-width="1.4"/><path d="M8 1.6 H10.6 L14.4 5.4 V8 H8 Z" fill="#8c8cd8"/><path d="M8 1.6 V8.6 M7.4 8 H14.6 M14.4 8 V5.4 L10.8 1.8" fill="none" stroke="#050520" stroke-width="1.3"/><path d="M6 8.5 H8" stroke="#000" stroke-width="1.3"/></svg>
<div class="ab" style="left:393px;top:132px;width:86px;height:24px;border:1px solid #8a8a8a;border-radius:3px;background:#fff"></div>
<div class="t" style="left:400.40px;top:138px;font-size:12.8px;color:#111;"><span style="display:inline-block;transform:scaleX(0.9444);transform-origin:0 0">Today</span></div>
<svg class="ab" style="left:464px;top:140px" width="11" height="9" viewBox="0 0 11 9"><path d="M1.5 2 L5.5 6 L9.5 2" fill="none" stroke="#000" stroke-width="2.4"/></svg>
<div class="ab" style="left:503px;top:132px;width:70px;height:22px;border:1px solid #aaa;border-radius:2px;background:#fff"></div>
<svg class="ab" style="left:576px;top:135px" width="16" height="16" viewBox="0 0 16 16"><defs><linearGradient id="cg" x1="0.3" y1="0.3" x2="0.6" y2="1"><stop offset="0.45" stop-color="#f4f4f4"/><stop offset="1" stop-color="#6a6a6a"/></linearGradient></defs><path d="M5 0.8 H11 L15.2 5 V11 L11 15.2 H5 L0.8 11 V5 Z" fill="url(#cg)" stroke="#5050b0" stroke-width="1.4"/><path d="M8 1.6 H10.6 L14.4 5.4 V8 H8 Z" fill="#8c8cd8"/><path d="M8 1.6 V8.6 M7.4 8 H14.6 M14.4 8 V5.4 L10.8 1.8" fill="none" stroke="#050520" stroke-width="1.3"/><path d="M6 8.5 H8" stroke="#000" stroke-width="1.3"/></svg>
<svg class="ab" style="left:614px;top:132px" width="16" height="17" viewBox="0 0 16 17"><rect x="0.5" y="1.5" width="7" height="12" fill="#f2f2f2" stroke="#222"/><path d="M5.5 3.5 H11.5 L14.5 6.5 V15.5 H5.5 Z" fill="#f6f6ee" stroke="#222"/><path d="M11.5 3.5 V6.5 H14.5" fill="#e8d890" stroke="#222" stroke-width="0.9"/><g fill="#0f7070"><rect x="2" y="4" width="3" height="1"/><rect x="2" y="6" width="3" height="1"/><rect x="2" y="8" width="3" height="1"/><rect x="2" y="10" width="3" height="1"/><rect x="7" y="6" width="4" height="1"/><rect x="7" y="8" width="6" height="1"/><rect x="7" y="10" width="6" height="1"/><rect x="7" y="12" width="6" height="1"/></g></svg>
<svg class="ab" style="left:636px;top:132px" width="15" height="17" viewBox="0 0 15 17"><rect x="0.5" y="2.5" width="11" height="12.5" rx="1" fill="#c89a10" stroke="#0a0a20"/><rect x="3" y="0.5" width="6" height="3" rx="1.5" fill="#223" stroke="#0a0a20" stroke-width="0.8"/><rect x="3" y="3" width="6" height="1.2" fill="#888"/><path d="M6.5 6.5 H11.5 L13.5 8.5 V15.5 H6.5 Z" fill="#f2f2f2" stroke="#111"/><g fill="#0f7070"><rect x="8" y="8" width="3" height="1"/><rect x="8" y="10" width="4" height="1"/><rect x="8" y="12" width="4" height="1"/></g></svg>
<div class="ab" style="left:0;top:160px;width:1181px;height:32px;background:#f7f7f7;border-bottom:1px solid #ddd"></div>
<div class="ab" style="left:133px;top:160px;width:1px;height:32px;background:#ddd"></div>
<div class="ab" style="left:169px;top:160px;width:1px;height:32px;background:#ddd"></div>
<div class="ab" style="left:278px;top:160px;width:1px;height:32px;background:#ddd"></div>
<div class="ab" style="left:387px;top:160px;width:1px;height:32px;background:#ddd"></div>
<div class="ab" style="left:497px;top:160px;width:1px;height:32px;background:#ddd"></div>
<div class="ab" style="left:607px;top:160px;width:1px;height:32px;background:#ddd"></div>
<div class="t" style="left:5.30px;top:165px;font-size:11.1px;font-weight:bold;color:#111;"><span style="display:inline-block;transform:scaleX(0.9820);transform-origin:0 0">Thursday</span></div>
<svg class="ab" style="left:114px;top:169px" width="11" height="11" viewBox="0 0 11 11"><path d="M3 0 H8 V3 H11 V8 H8 V11 H3 V8 H0 V3 H3 Z" fill="#0a0a3a"/><path d="M4 1 H7 V4 H10 V7 H7 V10 H4 V7 H1 V4 H4 Z" fill="#8484cc"/><rect x="4.5" y="1.5" width="2" height="3" fill="#a8b4f0"/><rect x="1" y="4" width="9" height="1" fill="#a0a8e8"/></svg>
<svg class="ab" style="left:140px;top:164px" width="14" height="14" viewBox="0 0 14 14"><path d="M3.4 3.4 L10.6 10.6 M10.6 3.4 L3.4 10.6" stroke="#000" stroke-width="3.3" stroke-linecap="round"/><path d="M3.4 3.4 L10.6 10.6 M10.6 3.4 L3.4 10.6" stroke="#fafaf0" stroke-width="1.4" stroke-linecap="round"/></svg>
<div class="ab" style="left:175px;top:164px;width:83px;height:24px;border:1px solid #8a8a8a;border-radius:3px;background:#fff"></div>
<div class="t" style="left:182.40px;top:170px;font-size:12.8px;color:#111;"><span style="display:inline-block;transform:scaleX(0.9444);transform-origin:0 0">Today</span></div>
<svg class="ab" style="left:243px;top:172px" width="11" height="9" viewBox="0 0 11 9"><path d="M1.5 2 L5.5 6 L9.5 2" fill="none" stroke="#000" stroke-width="2.4"/></svg>
<div class="ab" style="left:284px;top:164px;width:70px;height:22px;border:1px solid #aaa;border-radius:2px;background:#fff"></div>
<svg class="ab" style="left:357px;top:167px" width="16" height="16" viewBox="0 0 16 16"><defs><linearGradient id="cg" x1="0.3" y1="0.3" x2="0.6" y2="1"><stop offset="0.45" stop-color="#f4f4f4"/><stop offset="1" stop-color="#6a6a6a"/></linearGradient></defs><path d="M5 0.8 H11 L15.2 5 V11 L11 15.2 H5 L0.8 11 V5 Z" fill="url(#cg)" stroke="#5050b0" stroke-width="1.4"/><path d="M8 1.6 H10.6 L14.4 5.4 V8 H8 Z" fill="#8c8cd8"/><path d="M8 1.6 V8.6 M7.4 8 H14.6 M14.4 8 V5.4 L10.8 1.8" fill="none" stroke="#050520" stroke-width="1.3"/><path d="M6 8.5 H8" stroke="#000" stroke-width="1.3"/></svg>
<div class="ab" style="left:393px;top:164px;width:86px;height:24px;border:1px solid #8a8a8a;border-radius:3px;background:#fff"></div>
<div class="t" style="left:400.40px;top:170px;font-size:12.8px;color:#111;"><span style="display:inline-block;transform:scaleX(0.9444);transform-origin:0 0">Today</span></div>
<svg class="ab" style="left:464px;top:172px" width="11" height="9" viewBox="0 0 11 9"><path d="M1.5 2 L5.5 6 L9.5 2" fill="none" stroke="#000" stroke-width="2.4"/></svg>
<div class="ab" style="left:503px;top:164px;width:70px;height:22px;border:1px solid #aaa;border-radius:2px;background:#fff"></div>
<svg class="ab" style="left:576px;top:167px" width="16" height="16" viewBox="0 0 16 16"><defs><linearGradient id="cg" x1="0.3" y1="0.3" x2="0.6" y2="1"><stop offset="0.45" stop-color="#f4f4f4"/><stop offset="1" stop-color="#6a6a6a"/></linearGradient></defs><path d="M5 0.8 H11 L15.2 5 V11 L11 15.2 H5 L0.8 11 V5 Z" fill="url(#cg)" stroke="#5050b0" stroke-width="1.4"/><path d="M8 1.6 H10.6 L14.4 5.4 V8 H8 Z" fill="#8c8cd8"/><path d="M8 1.6 V8.6 M7.4 8 H14.6 M14.4 8 V5.4 L10.8 1.8" fill="none" stroke="#050520" stroke-width="1.3"/><path d="M6 8.5 H8" stroke="#000" stroke-width="1.3"/></svg>
<svg class="ab" style="left:614px;top:164px" width="16" height="17" viewBox="0 0 16 17"><rect x="0.5" y="1.5" width="7" height="12" fill="#f2f2f2" stroke="#222"/><path d="M5.5 3.5 H11.5 L14.5 6.5 V15.5 H5.5 Z" fill="#f6f6ee" stroke="#222"/><path d="M11.5 3.5 V6.5 H14.5" fill="#e8d890" stroke="#222" stroke-width="0.9"/><g fill="#0f7070"><rect x="2" y="4" width="3" height="1"/><rect x="2" y="6" width="3" height="1"/><rect x="2" y="8" width="3" height="1"/><rect x="2" y="10" width="3" height="1"/><rect x="7" y="6" width="4" height="1"/><rect x="7" y="8" width="6" height="1"/><rect x="7" y="10" width="6" height="1"/><rect x="7" y="12" width="6" height="1"/></g></svg>
<svg class="ab" style="left:636px;top:164px" width="15" height="17" viewBox="0 0 15 17"><rect x="0.5" y="2.5" width="11" height="12.5" rx="1" fill="#c89a10" stroke="#0a0a20"/><rect x="3" y="0.5" width="6" height="3" rx="1.5" fill="#223" stroke="#0a0a20" stroke-width="0.8"/><rect x="3" y="3" width="6" height="1.2" fill="#888"/><path d="M6.5 6.5 H11.5 L13.5 8.5 V15.5 H6.5 Z" fill="#f2f2f2" stroke="#111"/><g fill="#0f7070"><rect x="8" y="8" width="3" height="1"/><rect x="8" y="10" width="4" height="1"/><rect x="8" y="12" width="4" height="1"/></g></svg>
<div class="ab" style="left:0;top:192px;width:1181px;height:32px;background:#fdfdfd;border-bottom:1px solid #ddd"></div>
<div class="ab" style="left:133px;top:192px;width:1px;height:32px;background:#ddd"></div>
<div class="ab" style="left:169px;top:192px;width:1px;height:32px;background:#ddd"></div>
<div class="ab" style="left:278px;top:192px;width:1px;height:32px;background:#ddd"></div>
<div class="ab" style="left:387px;top:192px;width:1px;height:32px;background:#ddd"></div>
<div class="ab" style="left:497px;top:192px;width:1px;height:32px;background:#ddd"></div>
<div class="ab" style="left:607px;top:192px;width:1px;height:32px;background:#ddd"></div>
<div class="t" style="left:5.30px;top:197px;font-size:11.1px;font-weight:bold;color:#111;"><span style="display:inline-block;transform:scaleX(0.9970);transform-origin:0 0">Friday</span></div>
<svg class="ab" style="left:114px;top:201px" width="11" height="11" viewBox="0 0 11 11"><path d="M3 0 H8 V3 H11 V8 H8 V11 H3 V8 H0 V3 H3 Z" fill="#0a0a3a"/><path d="M4 1 H7 V4 H10 V7 H7 V10 H4 V7 H1 V4 H4 Z" fill="#8484cc"/><rect x="4.5" y="1.5" width="2" height="3" fill="#a8b4f0"/><rect x="1" y="4" width="9" height="1" fill="#a0a8e8"/></svg>
<svg class="ab" style="left:140px;top:196px" width="14" height="14" viewBox="0 0 14 14"><path d="M3.4 3.4 L10.6 10.6 M10.6 3.4 L3.4 10.6" stroke="#000" stroke-width="3.3" stroke-linecap="round"/><path d="M3.4 3.4 L10.6 10.6 M10.6 3.4 L3.4 10.6" stroke="#fafaf0" stroke-width="1.4" stroke-linecap="round"/></svg>
<div class="ab" style="left:175px;top:196px;width:83px;height:24px;border:1px solid #8a8a8a;border-radius:3px;background:#fff"></div>
<div class="t" style="left:182.40px;top:202px;font-size:12.8px;color:#111;"><span style="display:inline-block;transform:scaleX(0.9444);transform-origin:0 0">Today</span></div>
<svg class="ab" style="left:243px;top:204px" width="11" height="9" viewBox="0 0 11 9"><path d="M1.5 2 L5.5 6 L9.5 2" fill="none" stroke="#000" stroke-width="2.4"/></svg>
<div class="ab" style="left:284px;top:196px;width:70px;height:22px;border:1px solid #aaa;border-radius:2px;background:#fff"></div>
<svg class="ab" style="left:357px;top:199px" width="16" height="16" viewBox="0 0 16 16"><defs><linearGradient id="cg" x1="0.3" y1="0.3" x2="0.6" y2="1"><stop offset="0.45" stop-color="#f4f4f4"/><stop offset="1" stop-color="#6a6a6a"/></linearGradient></defs><path d="M5 0.8 H11 L15.2 5 V11 L11 15.2 H5 L0.8 11 V5 Z" fill="url(#cg)" stroke="#5050b0" stroke-width="1.4"/><path d="M8 1.6 H10.6 L14.4 5.4 V8 H8 Z" fill="#8c8cd8"/><path d="M8 1.6 V8.6 M7.4 8 H14.6 M14.4 8 V5.4 L10.8 1.8" fill="none" stroke="#050520" stroke-width="1.3"/><path d="M6 8.5 H8" stroke="#000" stroke-width="1.3"/></svg>
<div class="ab" style="left:393px;top:196px;width:86px;height:24px;border:1px solid #8a8a8a;border-radius:3px;background:#fff"></div>
<div class="t" style="left:400.40px;top:202px;font-size:12.8px;color:#111;"><span style="display:inline-block;transform:scaleX(0.9444);transform-origin:0 0">Today</span></div>
<svg class="ab" style="left:464px;top:204px" width="11" height="9" viewBox="0 0 11 9"><path d="M1.5 2 L5.5 6 L9.5 2" fill="none" stroke="#000" stroke-width="2.4"/></svg>
<div class="ab" style="left:503px;top:196px;width:70px;height:22px;border:1px solid #aaa;border-radius:2px;background:#fff"></div>
<svg class="ab" style="left:576px;top:199px" width="16" height="16" viewBox="0 0 16 16"><defs><linearGradient id="cg" x1="0.3" y1="0.3" x2="0.6" y2="1"><stop offset="0.45" stop-color="#f4f4f4"/><stop offset="1" stop-color="#6a6a6a"/></linearGradient></defs><path d="M5 0.8 H11 L15.2 5 V11 L11 15.2 H5 L0.8 11 V5 Z" fill="url(#cg)" stroke="#5050b0" stroke-width="1.4"/><path d="M8 1.6 H10.6 L14.4 5.4 V8 H8 Z" fill="#8c8cd8"/><path d="M8 1.6 V8.6 M7.4 8 H14.6 M14.4 8 V5.4 L10.8 1.8" fill="none" stroke="#050520" stroke-width="1.3"/><path d="M6 8.5 H8" stroke="#000" stroke-width="1.3"/></svg>
<svg class="ab" style="left:614px;top:196px" width="16" height="17" viewBox="0 0 16 17"><rect x="0.5" y="1.5" width="7" height="12" fill="#f2f2f2" stroke="#222"/><path d="M5.5 3.5 H11.5 L14.5 6.5 V15.5 H5.5 Z" fill="#f6f6ee" stroke="#222"/><path d="M11.5 3.5 V6.5 H14.5" fill="#e8d890" stroke="#222" stroke-width="0.9"/><g fill="#0f7070"><rect x="2" y="4" width="3" height="1"/><rect x="2" y="6" width="3" height="1"/><rect x="2" y="8" width="3" height="1"/><rect x="2" y="10" width="3" height="1"/><rect x="7" y="6" width="4" height="1"/><rect x="7" y="8" width="6" height="1"/><rect x="7" y="10" width="6" height="1"/><rect x="7" y="12" width="6" height="1"/></g></svg>
<svg class="ab" style="left:636px;top:196px" width="15" height="17" viewBox="0 0 15 17"><rect x="0.5" y="2.5" width="11" height="12.5" rx="1" fill="#c89a10" stroke="#0a0a20"/><rect x="3" y="0.5" width="6" height="3" rx="1.5" fill="#223" stroke="#0a0a20" stroke-width="0.8"/><rect x="3" y="3" width="6" height="1.2" fill="#888"/><path d="M6.5 6.5 H11.5 L13.5 8.5 V15.5 H6.5 Z" fill="#f2f2f2" stroke="#111"/><g fill="#0f7070"><rect x="8" y="8" width="3" height="1"/><rect x="8" y="10" width="4" height="1"/><rect x="8" y="12" width="4" height="1"/></g></svg>
<div class="ab" style="left:0;top:224px;width:1181px;height:32px;background:#f7f7f7;border-bottom:1px solid #ddd"></div>
<div class="ab" style="left:133px;top:224px;width:1px;height:32px;background:#ddd"></div>
<div class="ab" style="left:169px;top:224px;width:1px;height:32px;background:#ddd"></div>
<div class="ab" style="left:278px;top:224px;width:1px;height:32px;background:#ddd"></div>
<div class="ab" style="left:387px;top:224px;width:1px;height:32px;background:#ddd"></div>
<div class="ab" style="left:497px;top:224px;width:1px;height:32px;background:#ddd"></div>
<div class="ab" style="left:607px;top:224px;width:1px;height:32px;background:#ddd"></div>
<div class="t" style="left:5.30px;top:229px;font-size:11.1px;font-weight:bold;color:#111;"><span style="display:inline-block;transform:scaleX(1.0526);transform-origin:0 0">Saturday</span></div>
<svg class="ab" style="left:114px;top:233px" width="11" height="11" viewBox="0 0 11 11"><path d="M3 0 H8 V3 H11 V8 H8 V11 H3 V8 H0 V3 H3 Z" fill="#0a0a3a"/><path d="M4 1 H7 V4 H10 V7 H7 V10 H4 V7 H1 V4 H4 Z" fill="#8484cc"/><rect x="4.5" y="1.5" width="2" height="3" fill="#a8b4f0"/><rect x="1" y="4" width="9" height="1" fill="#a0a8e8"/></svg>
<svg class="ab" style="left:140px;top:228px" width="14" height="14" viewBox="0 0 14 14"><path d="M3.4 3.4 L10.6 10.6 M10.6 3.4 L3.4 10.6" stroke="#000" stroke-width="3.3" stroke-linecap="round"/><path d="M3.4 3.4 L10.6 10.6 M10.6 3.4 L3.4 10.6" stroke="#fafaf0" stroke-width="1.4" stroke-linecap="round"/></svg>
<div class="ab" style="left:175px;top:228px;width:83px;height:24px;border:1px solid #8a8a8a;border-radius:3px;background:#fff"></div>
<div class="t" style="left:182.40px;top:234px;font-size:12.8px;color:#111;"><span style="display:inline-block;transform:scaleX(0.9444);transform-origin:0 0">Today</span></div>
<svg class="ab" style="left:243px;top:236px" width="11" height="9" viewBox="0 0 11 9"><path d="M1.5 2 L5.5 6 L9.5 2" fill="none" stroke="#000" stroke-width="2.4"/></svg>
<div class="ab" style="left:284px;top:228px;width:70px;height:22px;border:1px solid #aaa;border-radius:2px;background:#fff"></div>
<svg class="ab" style="left:357px;top:231px" width="16" height="16" viewBox="0 0 16 16"><defs><linearGradient id="cg" x1="0.3" y1="0.3" x2="0.6" y2="1"><stop offset="0.45" stop-color="#f4f4f4"/><stop offset="1" stop-color="#6a6a6a"/></linearGradient></defs><path d="M5 0.8 H11 L15.2 5 V11 L11 15.2 H5 L0.8 11 V5 Z" fill="url(#cg)" stroke="#5050b0" stroke-width="1.4"/><path d="M8 1.6 H10.6 L14.4 5.4 V8 H8 Z" fill="#8c8cd8"/><path d="M8 1.6 V8.6 M7.4 8 H14.6 M14.4 8 V5.4 L10.8 1.8" fill="none" stroke="#050520" stroke-width="1.3"/><path d="M6 8.5 H8" stroke="#000" stroke-width="1.3"/></svg>
<div class="ab" style="left:393px;top:228px;width:86px;height:24px;border:1px solid #8a8a8a;border-radius:3px;background:#fff"></div>
<div class="t" style="left:400.40px;top:234px;font-size:12.8px;color:#111;"><span style="display:inline-block;transform:scaleX(0.9444);transform-origin:0 0">Today</span></div>
<svg class="ab" style="left:464px;top:236px" width="11" height="9" viewBox="0 0 11 9"><path d="M1.5 2 L5.5 6 L9.5 2" fill="none" stroke="#000" stroke-width="2.4"/></svg>
<div class="ab" style="left:503px;top:228px;width:70px;height:22px;border:1px solid #aaa;border-radius:2px;background:#fff"></div>
<svg class="ab" style="left:576px;top:231px" width="16" height="16" viewBox="0 0 16 16"><defs><linearGradient id="cg" x1="0.3" y1="0.3" x2="0.6" y2="1"><stop offset="0.45" stop-color="#f4f4f4"/><stop offset="1" stop-color="#6a6a6a"/></linearGradient></defs><path d="M5 0.8 H11 L15.2 5 V11 L11 15.2 H5 L0.8 11 V5 Z" fill="url(#cg)" stroke="#5050b0" stroke-width="1.4"/><path d="M8 1.6 H10.6 L14.4 5.4 V8 H8 Z" fill="#8c8cd8"/><path d="M8 1.6 V8.6 M7.4 8 H14.6 M14.4 8 V5.4 L10.8 1.8" fill="none" stroke="#050520" stroke-width="1.3"/><path d="M6 8.5 H8" stroke="#000" stroke-width="1.3"/></svg>
<svg class="ab" style="left:614px;top:228px" width="16" height="17" viewBox="0 0 16 17"><rect x="0.5" y="1.5" width="7" height="12" fill="#f2f2f2" stroke="#222"/><path d="M5.5 3.5 H11.5 L14.5 6.5 V15.5 H5.5 Z" fill="#f6f6ee" stroke="#222"/><path d="M11.5 3.5 V6.5 H14.5" fill="#e8d890" stroke="#222" stroke-width="0.9"/><g fill="#0f7070"><rect x="2" y="4" width="3" height="1"/><rect x="2" y="6" width="3" height="1"/><rect x="2" y="8" width="3" height="1"/><rect x="2" y="10" width="3" height="1"/><rect x="7" y="6" width="4" height="1"/><rect x="7" y="8" width="6" height="1"/><rect x="7" y="10" width="6" height="1"/><rect x="7" y="12" width="6" height="1"/></g></svg>
<svg class="ab" style="left:636px;top:228px" width="15" height="17" viewBox="0 0 15 17"><rect x="0.5" y="2.5" width="11" height="12.5" rx="1" fill="#c89a10" stroke="#0a0a20"/><rect x="3" y="0.5" width="6" height="3" rx="1.5" fill="#223" stroke="#0a0a20" stroke-width="0.8"/><rect x="3" y="3" width="6" height="1.2" fill="#888"/><path d="M6.5 6.5 H11.5 L13.5 8.5 V15.5 H6.5 Z" fill="#f2f2f2" stroke="#111"/><g fill="#0f7070"><rect x="8" y="8" width="3" height="1"/><rect x="8" y="10" width="4" height="1"/><rect x="8" y="12" width="4" height="1"/></g></svg>
<div class="ab" style="left:0;top:30px;width:133px;height:3px;background:#f7f7f7"></div>
</div>
<div class="ab" style="left:1559px;top:448px;width:18px;height:232px;background:#f1f1f1"></div>
<div class="ab" style="left:1562px;top:464px;width:12px;height:180px;background:#b3b3b3"></div>
<svg class="ab" style="left:1563px;top:452px" width="10" height="10"><path d="M1.5 7 L5 3 L8.5 7 Z" fill="#777"/></svg>
<svg class="ab" style="left:1563px;top:666px" width="10" height="10"><path d="M1.5 3 L5 7 L8.5 3 Z" fill="#111"/></svg>
<div class="ab" style="left:1527px;top:687px;width:49px;height:30px;background:#041f3a;border-radius:4px"></div>
<div class="t" style="left:1537.70px;top:695px;font-size:13.5px;color:#fff;"><span style="display:inline-block;transform:scaleX(0.9091);transform-origin:0 0">Save</span></div>
<div class="ab" style="left:372px;top:740px;width:1227px;height:1px;background:#a8a8c0"></div>
<div class="ab" style="left:1385px;top:747px;width:47px;height:30px;background:#041f3a;border-radius:4px"></div>
<div class="t" style="left:1395.60px;top:755px;font-size:13.5px;color:#fff;"><span style="display:inline-block;transform:scaleX(0.9815);transform-origin:0 0">New</span></div>
<div class="ab" style="left:1443px;top:747px;width:140px;height:30px;background:#041f3a;border-radius:4px"></div>
<div class="t" style="left:1454.15px;top:755px;font-size:13.5px;color:#fff;"><span style="display:inline-block;transform:scaleX(1.0233);transform-origin:0 0">New from Template</span></div>
<svg class="ab" style="left:0;top:0" width="1619" height="808"><path fill="rgba(0,0,0,0.23)" fill-rule="evenodd" d="M0 0 H1619 V808 H0 Z M486 449 H510 V474 H1046 V510 H503 V477 H486 Z"/></svg>
</body></html>
